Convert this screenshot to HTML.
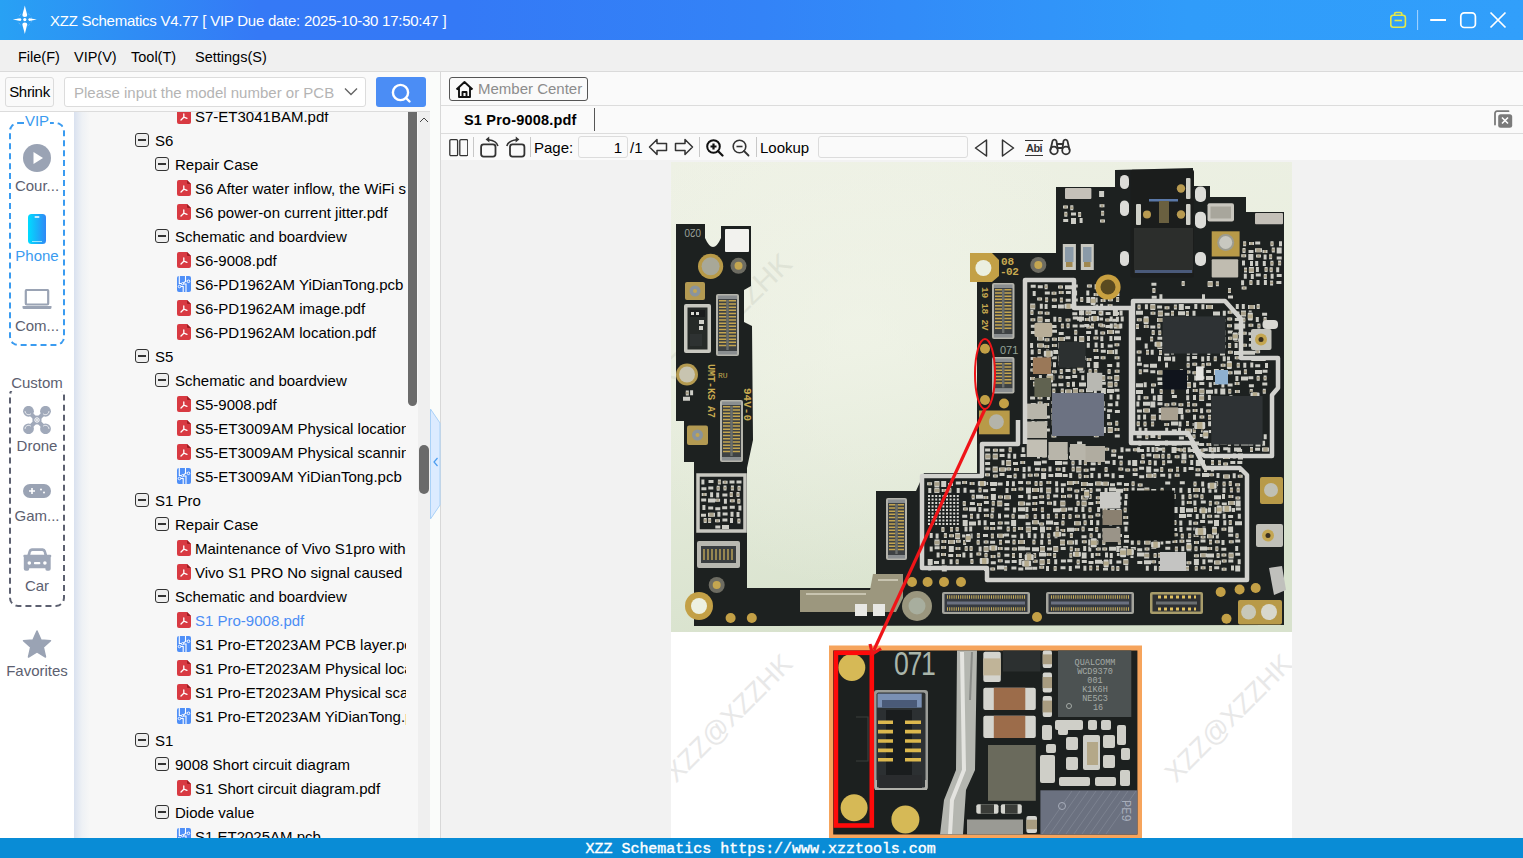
<!DOCTYPE html>
<html><head><meta charset="utf-8">
<style>
*{margin:0;padding:0;box-sizing:border-box}
html,body{width:1523px;height:858px;overflow:hidden;background:#fff;font-family:"Liberation Sans",sans-serif;color:#000}
.a{position:absolute}
#title{left:0;top:0;width:1523px;height:40px;background:linear-gradient(90deg,#28a1f4 0%,#3579f6 17%,#3479f6 30%,#3383f7 50%,#309cfa 78%,#319ffb 100%)}
#title .t{left:50px;top:12px;font-size:15px;color:#fff;white-space:nowrap;letter-spacing:-0.25px}
#menu{left:0;top:40px;width:1523px;height:32px;background:#f0f0f0;border-bottom:1px solid #dadada}
#menu span{position:absolute;top:9px;font-size:14.5px;color:#000}
#status{left:0;top:838px;width:1523px;height:20px;background:#098cd6}
#status .t{left:585.5px;top:3px;font-family:"Liberation Mono",monospace;font-size:15px;color:#fff;white-space:nowrap;-webkit-text-stroke:0.4px #fff;letter-spacing:-0.02px}

#lp{left:0;top:72px;width:441px;height:766px;background:#fafafa}
#lp .row0{left:0;top:0;width:431px;height:40px;background:#fafafa;border-bottom:1px solid #dcdcdc}
#shrink{left:5px;top:5px;width:49px;height:30px;border:1px solid #dcdcdc;border-radius:3px;background:#fafafa;font-size:15px;line-height:28px;text-align:center;letter-spacing:-0.3px}
#sinput{left:64px;top:5px;width:302px;height:30px;border:1px solid #dcdcdc;border-radius:3px;background:#fff}
#sinput span{position:absolute;left:9px;top:6px;font-size:15px;color:#b4b4b4;white-space:nowrap}
#sbtn{left:376px;top:5px;width:50px;height:30px;border-radius:3px;background:#4b8df5}
#strip{left:0;top:40px;width:74px;height:726px;background:#fff}
.dbox{position:absolute;left:9px;width:56px;border:2px dashed #3a9bf0;border-radius:9px}
.lbl{position:absolute;left:0;width:74px;text-align:center;font-size:15px;color:#5c6070;white-space:nowrap}
#tree{left:74px;top:40px;width:344px;height:726px;background:linear-gradient(90deg,#d9e1ef 0px,#eef1f5 8px,#f7f7f7 16px);overflow:hidden}
#tree .clip{position:absolute;left:0;top:0;width:332px;height:726px;overflow:hidden}
.tt{position:absolute;margin-top:1px;font-size:15px;line-height:18px;white-space:nowrap;color:#000}
.tt.sel{color:#4b8df5}
.bx{position:absolute;width:14px;height:14px;border:1.3px solid #333;border-radius:3px;background:#eeeeee}
.bx:after{content:"";position:absolute;left:2px;top:5.3px;width:8px;height:1.5px;background:#333}
svg.pdf,svg.pcb{position:absolute;width:14px;height:16px}
#vs1{left:408px;top:40px;width:9px;height:294px;background:#6b6b6b;border-radius:0 0 5px 5px}
#track{left:418px;top:40px;width:12px;height:726px;background:#efefef}
#vs2{left:419px;top:373px;width:10px;height:49px;background:#6a6a6a;border-radius:5px}
#split{left:430px;top:0;width:11px;height:766px;background:#fafcfa;border-right:1px solid #d8d8d8}

#rp{left:441px;top:72px;width:1082px;height:766px;background:#fafafa}
#mc{left:8px;top:5px;width:139px;height:24px;border:1px solid #555;border-radius:3px;background:#fafafa}
#mc span{position:absolute;left:28px;top:2px;font-size:15px;color:#8c8c8c;white-space:nowrap}
#l1{left:0;top:33px;width:1082px;height:1px;background:#dcdcdc}
#tab{left:23px;top:40px;font-size:14.5px;font-weight:bold;white-space:nowrap;letter-spacing:0.2px}
#tabsep{left:153px;top:36px;width:1px;height:23px;background:#555}
#l2{left:0;top:61px;width:1082px;height:1px;background:#dcdcdc}
#content{left:0;top:88px;width:1082px;height:678px;background:#f2f2f2;overflow:hidden}
.tsep{position:absolute;top:65px;width:1px;height:20px;background:#c8c8c8}
.tb{position:absolute;font-size:15px;white-space:nowrap;margin-top:1px}
.inp{position:absolute;border:1px solid #dcdcdc;border-radius:3px;background:#fafafa}
</style></head><body>
<div id="title" class="a">
  <svg class="a" style="left:8px;top:2px" width="36" height="36" viewBox="0 0 36 36"><g fill="#fff"><path d="M16.8 3.6 L19.2 13 L18.7 14.5 L16.8 15 L14.9 14.5 L14.4 13Z"/><path d="M16.8 32 L19.2 22.6 L18.7 21 L16.8 20.5 L14.9 21 L14.4 22.6Z"/><path d="M4.8 17.6 L12.5 16.2 L13.5 17.6 L12.5 19 Z"/><path d="M28.8 17.6 L21.1 16.2 L20.1 17.6 L21.1 19 Z"/><circle cx="16.8" cy="17.6" r="1.6"/></g><circle cx="16.8" cy="17.6" r="6.8" fill="none" stroke="#fff" stroke-opacity=".3" stroke-width=".8" stroke-dasharray="3 2"/></svg>
  <div class="a t">XZZ Schematics V4.77 [ VIP Due date: 2025-10-30 17:50:47 ]</div>
  <svg class="a" style="left:1385px;top:8px" width="130" height="26" viewBox="0 0 130 26">
    <g fill="none" stroke="#e4e848" stroke-width="1.6">
      <rect x="5.8" y="7.2" width="14.6" height="12" rx="2.5"/>
      <path d="M9.6 7 V6 a1.5 1.5 0 0 1 1.5 -1.5 h4.2 a1.5 1.5 0 0 1 1.5 1.5 V7"/>
      <path d="M9.5 12.5 H17"/>
    </g>
    <path d="M32.6 2 V22" stroke="#a9d6ff" stroke-width="1"/>
    <path d="M45.2 12 H61" stroke="#fff" stroke-width="2"/>
    <rect x="75.8" y="4.9" width="14.6" height="14.6" rx="3.5" fill="none" stroke="#fff" stroke-width="1.7"/>
    <path d="M105.5 4.5 L120.5 19.5 M120.5 4.5 L105.5 19.5" stroke="#fff" stroke-width="1.7"/>
  </svg>
</div>
<div id="menu" class="a">
  <span style="left:18px">File(F)</span>
  <span style="left:74px">VIP(V)</span>
  <span style="left:131px">Tool(T)</span>
  <span style="left:195px">Settings(S)</span>
</div>


<svg width="0" height="0" style="position:absolute">
 <defs>
  <symbol id="pdf" viewBox="0 0 14 16">
   <path d="M2 0 H10 L14 4 V14 a2 2 0 0 1 -2 2 H2 a2 2 0 0 1 -2 -2 V2 a2 2 0 0 1 2 -2Z" fill="#d83a42"/>
   <path d="M10 0 L14 4 H11 a1 1 0 0 1 -1 -1Z" fill="#9e1c22"/>
   <path d="M6.8 6 V9.2 M6.8 9.2 L4 12 M6.8 9.2 L10 10.3" stroke="#fff" stroke-width="1.3" fill="none" stroke-linecap="round"/>
  </symbol>
  <symbol id="pcb" viewBox="0 0 14 16">
   <rect x="0" y="0" width="14" height="16" rx="2" fill="#4f8ff7"/>
   <path d="M2.3 0 V7.5 H5.5 L8.5 5.5 V0 M13 5 H9.5 M3 10.5 H6.2 V16 M9 16 V8 H5.5" stroke="#fff" stroke-width="1.1" fill="none"/>
   <circle cx="11.5" cy="5.3" r="1.3" fill="#4f8ff7" stroke="#fff" stroke-width=".9"/>
   <circle cx="2.5" cy="10.5" r="1.3" fill="#4f8ff7" stroke="#fff" stroke-width=".9"/>
   <circle cx="5.5" cy="7.7" r="1.1" fill="#4f8ff7" stroke="#fff" stroke-width=".9"/>
  </symbol>
 </defs>
</svg>
<div id="lp" class="a">
 <div class="a row0">
  <div id="shrink" class="a">Shrink</div>
  <div id="sinput" class="a"><span>Please input the model number or PCB</span>
   <svg class="a" style="left:279px;top:9px" width="14" height="10" viewBox="0 0 14 10"><path d="M1 1.5 L7 7.5 L13 1.5" fill="none" stroke="#666" stroke-width="1.4"/></svg>
  </div>
  <div id="sbtn" class="a"><svg class="a" style="left:14px;top:5px" width="22" height="22" viewBox="0 0 22 22"><circle cx="10.5" cy="10.5" r="7.6" fill="none" stroke="#fff" stroke-width="2.4"/><path d="M16 16 L19.5 19.5" stroke="#fff" stroke-width="2.4" stroke-linecap="round"/></svg></div>
 </div>
 <div id="strip" class="a">
  <div class="dbox" style="top:10px;height:224px"></div>
  <div class="lbl" style="top:0px;"><span style="background:#fff;color:#3a9bf0;padding:0 1px">VIP</span></div>
  <svg class="a" style="left:23px;top:32px" width="28" height="28" viewBox="0 0 28 28"><circle cx="14" cy="14" r="14" fill="#9aa3b4"/><path d="M10.5 8 L20 14 L10.5 20Z" fill="#fff"/></svg>
  <div class="lbl" style="top:65px">Cour...</div>
  <svg class="a" style="left:28px;top:102px" width="18" height="30" viewBox="0 0 18 30"><defs><linearGradient id="pg" x1="0" x2="1"><stop offset="0" stop-color="#00dcff"/><stop offset="1" stop-color="#3088f5"/></linearGradient></defs><rect x="0" y="0" width="18" height="30" rx="3.5" fill="url(#pg)"/><rect x="6.5" y="2.3" width="5" height="1.4" rx=".7" fill="#fff"/><rect x="4" y="27" width="10" height="1" fill="#9be8ff"/></svg>
  <div class="lbl" style="top:135px;color:#3a9bf0">Phone</div>
  <svg class="a" style="left:22px;top:177px" width="30" height="20" viewBox="0 0 30 20"><rect x="3.8" y="1" width="22.4" height="14.5" rx="1" fill="none" stroke="#9aa3b4" stroke-width="2.2"/><path d="M0.5 17 H29.5 V18.5 a1.5 1.5 0 0 1 -1.5 1.5 H2 a1.5 1.5 0 0 1 -1.5 -1.5Z" fill="#9aa3b4"/></svg>
  <div class="lbl" style="top:205px">Com...</div>
  <div class="dbox" style="top:274px;height:221px;border-color:#5c6070"></div>
  <div class="lbl" style="top:262px"><span style="background:#fff;padding:0 1px">Custom</span></div>
  <svg class="a" style="left:23px;top:294px" width="28" height="28" viewBox="0 0 28 28"><g fill="#a0a9ba"><circle cx="5.5" cy="5.3" r="5.4"/><circle cx="22.5" cy="5.3" r="5.4"/><circle cx="5.5" cy="22.8" r="5.4"/><circle cx="22.5" cy="22.8" r="5.4"/></g><path d="M6 6 L22 22.3 M22 6 L6 22.3" stroke="#a0a9ba" stroke-width="4.2"/><circle cx="14" cy="14" r="4.6" fill="#a0a9ba"/><g fill="none" stroke="#fff" stroke-width=".7"><path d="M2 5 a3.6 3.6 0 0 0 6 2.8"/><path d="M26 5 a3.6 3.6 0 0 1 -6 2.8"/><path d="M2 23 a3.6 3.6 0 0 1 6 -2.8"/><path d="M26 23 a3.6 3.6 0 0 0 -6 -2.8"/><circle cx="14" cy="14" r="2.2" stroke-width="1"/></g><circle cx="14" cy="14" r="0.9" fill="#fff"/></svg>
  <div class="lbl" style="top:325px">Drone</div>
  <svg class="a" style="left:23px;top:372px" width="28" height="14" viewBox="0 0 28 14"><rect x="0" y="0" width="28" height="14" rx="7" fill="#9aa3b4"/><path d="M6 7 H12 M9 4 V10" stroke="#fff" stroke-width="1.6"/><circle cx="18" cy="5.5" r="1" fill="#fff"/><circle cx="21" cy="8.5" r="1" fill="#fff"/></svg>
  <div class="lbl" style="top:395px">Gam...</div>
  <svg class="a" style="left:23px;top:436px" width="29" height="24" viewBox="23 548 29 24"><path d="M26.8 557 L28.6 550.8 Q29.3 548.3 31.8 548.3 H42.7 Q45.2 548.3 45.9 550.8 L47.7 557Z" fill="#9ea7b8"/><path d="M29.6 557.2 L30.9 552.3 Q31.3 550.9 32.6 550.9 H41.9 Q43.2 550.9 43.6 552.3 L44.9 557.2Z" fill="#fff"/><rect x="23.3" y="554.7" width="28" height="2.6" rx="1.2" fill="#9ea7b8"/><path d="M23.8 557 H50.7 V568.8 Q50.7 570.8 48.7 570.8 H47 Q45.4 570.8 45.4 569 V568.3 H29.2 V569 Q29.2 570.8 27.6 570.8 H25.8 Q23.8 570.8 23.8 568.8Z" fill="#9ea7b8"/><circle cx="29.3" cy="563" r="1.8" fill="#fff"/><circle cx="44.9" cy="563" r="1.8" fill="#fff"/><rect x="33.9" y="561.9" width="6.5" height="2.4" rx="1" fill="#fff"/></svg>
  <div class="lbl" style="top:465px">Car</div>
  <svg class="a" style="left:22px;top:518px" width="30" height="29" viewBox="0 0 30 29"><path d="M15 1 L19 10 L28.5 10.8 L21.3 17.2 L23.5 27 L15 21.8 L6.5 27 L8.7 17.2 L1.5 10.8 L11 10Z" fill="#9aa3b4" stroke="#9aa3b4" stroke-width="1.5" stroke-linejoin="round"/></svg>
  <div class="lbl" style="top:550px">Favorites</div>
 </div>
 <div id="tree" class="a"><div class="clip">
<svg class="pdf" style="left:103px;top:-4px"><use href="#pdf"/></svg><span class="tt" style="left:121px;top:-5px">S7-ET3041BAM.pdf</span>
<i class="bx" style="left:61px;top:21px"></i><span class="tt" style="left:81px;top:19px">S6</span>
<i class="bx" style="left:81px;top:45px"></i><span class="tt" style="left:101px;top:43px">Repair Case</span>
<svg class="pdf" style="left:103px;top:68px"><use href="#pdf"/></svg><span class="tt" style="left:121px;top:67px">S6 After water inflow, the WiFi signal</span>
<svg class="pdf" style="left:103px;top:92px"><use href="#pdf"/></svg><span class="tt" style="left:121px;top:91px">S6 power-on current jitter.pdf</span>
<i class="bx" style="left:81px;top:117px"></i><span class="tt" style="left:101px;top:115px">Schematic and boardview</span>
<svg class="pdf" style="left:103px;top:140px"><use href="#pdf"/></svg><span class="tt" style="left:121px;top:139px">S6-9008.pdf</span>
<svg class="pcb" style="left:103px;top:164px"><use href="#pcb"/></svg><span class="tt" style="left:121px;top:163px">S6-PD1962AM YiDianTong.pcb</span>
<svg class="pdf" style="left:103px;top:188px"><use href="#pdf"/></svg><span class="tt" style="left:121px;top:187px">S6-PD1962AM image.pdf</span>
<svg class="pdf" style="left:103px;top:212px"><use href="#pdf"/></svg><span class="tt" style="left:121px;top:211px">S6-PD1962AM location.pdf</span>
<i class="bx" style="left:61px;top:237px"></i><span class="tt" style="left:81px;top:235px">S5</span>
<i class="bx" style="left:81px;top:261px"></i><span class="tt" style="left:101px;top:259px">Schematic and boardview</span>
<svg class="pdf" style="left:103px;top:284px"><use href="#pdf"/></svg><span class="tt" style="left:121px;top:283px">S5-9008.pdf</span>
<svg class="pdf" style="left:103px;top:308px"><use href="#pdf"/></svg><span class="tt" style="left:121px;top:307px">S5-ET3009AM Physical location.pdf</span>
<svg class="pdf" style="left:103px;top:332px"><use href="#pdf"/></svg><span class="tt" style="left:121px;top:331px">S5-ET3009AM Physical scanning.pdf</span>
<svg class="pcb" style="left:103px;top:356px"><use href="#pcb"/></svg><span class="tt" style="left:121px;top:355px">S5-ET3009AM YiDianTong.pcb</span>
<i class="bx" style="left:61px;top:381px"></i><span class="tt" style="left:81px;top:379px">S1 Pro</span>
<i class="bx" style="left:81px;top:405px"></i><span class="tt" style="left:101px;top:403px">Repair Case</span>
<svg class="pdf" style="left:103px;top:428px"><use href="#pdf"/></svg><span class="tt" style="left:121px;top:427px">Maintenance of Vivo S1pro without</span>
<svg class="pdf" style="left:103px;top:452px"><use href="#pdf"/></svg><span class="tt" style="left:121px;top:451px">Vivo S1 PRO No signal caused by</span>
<i class="bx" style="left:81px;top:477px"></i><span class="tt" style="left:101px;top:475px">Schematic and boardview</span>
<svg class="pdf" style="left:103px;top:500px"><use href="#pdf"/></svg><span class="tt sel" style="left:121px;top:499px">S1 Pro-9008.pdf</span>
<svg class="pcb" style="left:103px;top:524px"><use href="#pcb"/></svg><span class="tt" style="left:121px;top:523px">S1 Pro-ET2023AM PCB layer.pcb</span>
<svg class="pdf" style="left:103px;top:548px"><use href="#pdf"/></svg><span class="tt" style="left:121px;top:547px">S1 Pro-ET2023AM Physical location.pdf</span>
<svg class="pdf" style="left:103px;top:572px"><use href="#pdf"/></svg><span class="tt" style="left:121px;top:571px">S1 Pro-ET2023AM Physical scanning.pdf</span>
<svg class="pcb" style="left:103px;top:596px"><use href="#pcb"/></svg><span class="tt" style="left:121px;top:595px">S1 Pro-ET2023AM YiDianTong.pcb</span>
<i class="bx" style="left:61px;top:621px"></i><span class="tt" style="left:81px;top:619px">S1</span>
<i class="bx" style="left:81px;top:645px"></i><span class="tt" style="left:101px;top:643px">9008 Short circuit diagram</span>
<svg class="pdf" style="left:103px;top:668px"><use href="#pdf"/></svg><span class="tt" style="left:121px;top:667px">S1 Short circuit diagram.pdf</span>
<i class="bx" style="left:81px;top:693px"></i><span class="tt" style="left:101px;top:691px">Diode value</span>
<svg class="pcb" style="left:103px;top:716px"><use href="#pcb"/></svg><span class="tt" style="left:121px;top:715px">S1 ET2025AM.pcb</span>

 </div></div>
 <div id="track" class="a"><svg class="a" style="left:1px;top:4px" width="10" height="8" viewBox="0 0 10 8"><path d="M1 6 L5 2 L9 6" fill="none" stroke="#444" stroke-width="1"/></svg></div>
 <div id="vs1" class="a"></div>
 <div id="vs2" class="a"></div>
 <div id="split" class="a"><svg class="a" style="left:0;top:337px" width="11" height="111" viewBox="0 0 11 111"><path d="M0.5 0 L10 14 V96 L0.5 110Z" fill="#dcebff" stroke="#a9d1f7" stroke-width="1"/><path d="M7.5 49 L4 53 L7.5 57" fill="none" stroke="#4a9cf0" stroke-width="1.2"/></svg></div>
</div>


<div id="rp" class="a">
 <div id="mc" class="a"><svg class="a" style="left:5px;top:2px" width="19" height="19" viewBox="0 0 19 19"><path d="M1.5 9.5 L9.5 2 L17.5 9.5 M4 7.5 V17 H15 V7.5 M7.5 17 V12 H11.5 V17" fill="none" stroke="#111" stroke-width="1.9" stroke-linejoin="round"/></svg><span>Member Center</span></div>
 <div id="l1" class="a"></div>
 <div id="tab" class="a">S1 Pro-9008.pdf</div>
 <div id="tabsep" class="a"></div>
 <svg class="a" style="left:1053px;top:38px" width="20" height="19" viewBox="0 0 20 19"><path d="M1 14.5 V3.2 a2 2 0 0 1 2 -2 H14.5" fill="none" stroke="#7a7a7a" stroke-width="1.8" stroke-linecap="round"/><rect x="4.2" y="4.3" width="14" height="13.5" rx="2.5" fill="#7a7a7a"/><path d="M8 7.5 L14 13.5 M14 7.5 L8 13.5" stroke="#fff" stroke-width="1.6"/></svg>
 <div id="l2" class="a"></div>
 <!-- toolbar -->
 <svg class="a" style="left:7px;top:66px" width="20" height="19" viewBox="0 0 20 19"><rect x="1.8" y="1.7" width="7.8" height="16" rx="1.2" fill="none" stroke="#333" stroke-width="1.3"/><rect x="11.8" y="1.7" width="8" height="16" rx="1.2" fill="none" stroke="#333" stroke-width="1.3"/></svg><div class="tsep" style="left:32px;background:#c8c8c8"></div><svg class="a" style="left:38px;top:64px" width="22" height="22" viewBox="0 0 22 22"><rect x="2.1" y="8.4" width="14.4" height="12.2" rx="2.5" fill="none" stroke="#333" stroke-width="1.8"/><path d="M18.9 10 Q17.5 4.6 9.5 3.7" fill="none" stroke="#333" stroke-width="1.6"/><path d="M6.6 3.6 L10.2 0.6 L10.4 6.6Z" fill="#333"/></svg><svg class="a" style="left:64px;top:64px" width="22" height="22" viewBox="0 0 22 22"><rect x="5" y="8.4" width="14.4" height="12.2" rx="2.5" fill="none" stroke="#333" stroke-width="1.8"/><path d="M1.8 10 Q3.4 4.6 11.5 3.7" fill="none" stroke="#333" stroke-width="1.6"/><path d="M14.4 3.6 L10.8 0.6 L10.6 6.6Z" fill="#333"/></svg><div class="tsep" style="left:89px"></div>
 <div class="tb" style="left:93px;top:66px">Page:</div>
 <div class="inp" style="left:137px;top:64px;width:50px;height:22px"><span class="tb" style="right:5px;top:1px">1</span></div>
 <div class="tb" style="left:189px;top:66px">/1</div>
 <svg class="a" style="left:207px;top:66px" width="20" height="18" viewBox="0 0 20 18"><path d="M1.5 9 L9 1.5 V5.5 H18.5 V12.5 H9 V16.5Z" fill="none" stroke="#333" stroke-width="1.5" stroke-linejoin="round"/></svg>
 <svg class="a" style="left:233px;top:66px" width="20" height="18" viewBox="0 0 20 18"><path d="M18.5 9 L11 1.5 V5.5 H1.5 V12.5 H11 V16.5Z" fill="none" stroke="#333" stroke-width="1.5" stroke-linejoin="round"/></svg>
 <div class="tsep" style="left:258px"></div>
 <svg class="a" style="left:265px;top:67px" width="18" height="18" viewBox="0 0 18 18"><circle cx="7.5" cy="7.5" r="6.3" fill="none" stroke="#111" stroke-width="2"/><path d="M12 12 L16.5 16.5" stroke="#111" stroke-width="2.2" stroke-linecap="round"/><path d="M4.5 7.5 H10.5 M7.5 4.5 V10.5" stroke="#111" stroke-width="2.2"/></svg>
 <svg class="a" style="left:291px;top:67px" width="18" height="18" viewBox="0 0 18 18"><circle cx="7.5" cy="7.5" r="6.3" fill="none" stroke="#333" stroke-width="1.6"/><path d="M12 12 L16.5 16.5" stroke="#333" stroke-width="1.8" stroke-linecap="round"/><path d="M4.5 7.5 H10.5" stroke="#333" stroke-width="1.6"/></svg>
 <div class="tsep" style="left:315px"></div>
 <div class="tb" style="left:319px;top:66px">Lookup</div>
 <div class="inp" style="left:377px;top:64px;width:150px;height:22px"></div>
 <svg class="a" style="left:533px;top:67px" width="14" height="18" viewBox="0 0 14 18"><path d="M12.5 1 L1.5 9 L12.5 17Z" fill="none" stroke="#333" stroke-width="1.5" stroke-linejoin="round"/></svg>
 <svg class="a" style="left:560px;top:67px" width="14" height="18" viewBox="0 0 14 18"><path d="M1.5 1 L12.5 9 L1.5 17Z" fill="none" stroke="#333" stroke-width="1.5" stroke-linejoin="round"/></svg>
 <svg class="a" style="left:583px;top:67px" width="20" height="18" viewBox="0 0 20 18"><path d="M1 1.5 H19 M1 16.5 H19" stroke="#333" stroke-width="1.2"/><text x="10" y="13.3" text-anchor="middle" font-family="Liberation Sans" font-weight="bold" font-size="11" fill="#333" letter-spacing="-0.6">Abi</text></svg>
 <svg class="a" style="left:608px;top:66px" width="22" height="18" viewBox="0 0 22 18"><g fill="none" stroke="#333" stroke-width="1.8"><circle cx="5" cy="12.5" r="3.8"/><circle cx="17" cy="12.5" r="3.8"/><path d="M1.5 12 L3.5 3 a2.2 2.2 0 0 1 4 0 L8.5 10 M20.5 12 L18.5 3 a2.2 2.2 0 0 0 -4 0 L13.5 10 M8.3 6 H13.7 M8.7 10 H13.3"/></g></svg>
 <div id="content" class="a"><svg class="a" id="pdfsvg" style="left:230px;top:2px" width="621" height="676" viewBox="671 162 621 676"><rect x="671" y="162" width="621" height="676" fill="#fff"/><defs><linearGradient id="cream" x1="0" y1="0" x2="0.25" y2="1"><stop offset="0" stop-color="#eef1e5"/><stop offset=".45" stop-color="#e9eedf"/><stop offset="1" stop-color="#d8e2cd"/></linearGradient><radialGradient id="hl" gradientUnits="userSpaceOnUse" cx="860" cy="330" r="260"><stop offset="0" stop-color="#f2f5ea" stop-opacity=".6"/><stop offset="1" stop-color="#f2f5ea" stop-opacity="0"/></radialGradient></defs><rect x="671" y="162" width="621" height="470" fill="url(#cream)"/><rect x="671" y="162" width="621" height="470" fill="url(#hl)"/><g font-family="Liberation Sans" font-size="27" fill="#e8e8e8"><text transform="translate(727 720) rotate(-45) translate(-81 9)">XZZ@XZZHK</text><text transform="translate(1227 720) rotate(-45) translate(-81 9)">XZZ@XZZHK</text></g><g id="pcb"><text x="0" y="0" font-family="Liberation Sans" font-size="29" fill="#dfe3d6" transform="translate(721 322) rotate(-44) translate(-88 10)">XZZ@XZZHK</text><path d="M676 224 L705 224 L705 238 Q713 256 721 238 L721 226 L751 226 L751 286 L744 290 L744 322 L752 326 L753 440 L747 468 L747 588 L876 588 L876 491 L916 491 L924 473 L977 473 L977 282 L971 280 L971 253 L1056 253 L1056 187 L1115 187 L1115 170 L1193 168 L1193 186 L1210 186 L1210 197 L1246 197 L1246 212 L1284 212 L1284 625 L694 626 L694 462 L684 462 L684 421 L676 421 Z" fill="#1d2120" /><path d="M927.1 482.3h5v3h-5zM934.4 481.0h5v6h-5zM941.2 481.0h5v6h-5zM948.0 483.1h5v3h-5zM955.8 481.5h5v3h-5zM962.1 481.1h5v3h-5zM969.6 482.1h5v3h-5zM977.7 481.3h3v5h-3zM983.1 482.0h5v3h-5zM990.0 482.1h7v4h-7zM997.6 482.4h5v3h-5zM1006.0 481.0h3v5h-3zM1011.9 481.2h3v5h-3zM1018.1 481.1h5v3h-5zM1025.9 481.2h5v3h-5zM1034.6 481.1h3v5h-3zM1039.5 481.1h3v5h-3zM1046.3 481.0h5v3h-5zM1055.1 481.3h3v5h-3zM1060.8 483.2h5v3h-5zM1067.0 481.1h7v4h-7zM1074.1 481.0h5v3h-5zM1081.0 481.9h7v4h-7zM1088.1 483.1h5v3h-5zM1095.0 481.5h7v4h-7zM1102.0 481.8h7v4h-7zM1110.0 483.2h5v3h-5zM1116.8 482.3h5v3h-5zM1124.0 483.1h5v3h-5zM1131.6 481.2h3v5h-3zM1137.7 483.4h5v3h-5zM1165.2 481.5h5v3h-5zM1179.8 481.2h5v3h-5zM1193.5 481.4h3v5h-3zM1201.2 481.5h3v5h-3zM1207.9 483.0h5v3h-5zM1215.1 481.3h3v5h-3zM1222.6 481.5h3v5h-3zM1228.8 481.1h3v5h-3zM1235.1 483.3h5v3h-5zM928.3 488.0h3v5h-3zM934.4 487.5h5v6h-5zM941.7 488.9h5v3h-5zM948.3 487.8h3v5h-3zM956.7 487.9h3v5h-3zM963.5 487.8h3v5h-3zM969.7 489.7h5v3h-5zM978.5 487.6h3v5h-3zM983.1 489.2h5v3h-5zM990.7 487.9h5v3h-5zM1005.5 488.0h3v5h-3zM1011.3 488.0h5v3h-5zM1018.4 487.5h5v3h-5zM1026.0 487.5h5v6h-5zM1032.0 487.9h7v4h-7zM1039.8 487.6h3v5h-3zM1046.1 487.5h5v6h-5zM1055.4 487.5h3v5h-3zM1061.0 487.8h3v5h-3zM1067.2 487.8h5v3h-5zM1074.3 489.4h5v3h-5zM1081.0 488.1h5v3h-5zM1089.4 488.0h3v5h-3zM1095.8 488.5h5v3h-5zM1104.5 487.9h3v5h-3zM1109.0 487.6h7v4h-7zM1116.0 488.8h7v4h-7zM1123.5 487.9h5v3h-5zM1131.6 487.6h3v5h-3zM1137.0 488.2h7v4h-7zM1144.3 487.5h5v6h-5zM1151.2 489.0h5v3h-5zM1160.6 487.7h3v5h-3zM1172.1 487.9h3v5h-3zM1179.4 487.8h3v5h-3zM1187.8 487.9h3v5h-3zM1193.0 488.0h7v4h-7zM1201.9 487.8h3v5h-3zM1208.5 487.8h3v5h-3zM1214.2 487.6h3v5h-3zM1222.5 487.7h3v5h-3zM1229.9 487.5h3v5h-3zM1236.7 487.5h3v5h-3zM929.0 494.1h3v5h-3zM934.0 494.3h7v4h-7zM949.0 495.1h5v3h-5zM956.7 494.1h3v5h-3zM971.7 494.4h3v5h-3zM976.0 494.7h7v4h-7zM983.3 496.1h5v3h-5zM990.9 494.0h5v6h-5zM998.0 495.5h5v3h-5zM1004.0 495.3h7v4h-7zM1018.2 494.9h5v3h-5zM1027.7 494.5h3v5h-3zM1032.5 495.9h5v3h-5zM1039.1 495.2h5v3h-5zM1046.8 494.3h3v5h-3zM1053.2 494.5h5v3h-5zM1061.0 495.1h5v3h-5zM1067.1 494.6h5v3h-5zM1075.2 494.2h3v5h-3zM1081.0 495.5h7v4h-7zM1088.6 494.1h3v5h-3zM1095.8 496.2h5v3h-5zM1103.4 494.3h3v5h-3zM1111.6 494.5h3v5h-3zM1116.7 496.4h5v3h-5zM1124.7 494.0h3v5h-3zM1130.9 494.1h3v5h-3zM1137.1 494.0h5v6h-5zM1144.0 494.8h5v3h-5zM1158.7 494.1h3v5h-3zM1165.0 495.0h7v4h-7zM1172.7 494.0h3v5h-3zM1181.4 494.4h3v5h-3zM1188.5 494.1h3v5h-3zM1193.5 494.5h5v3h-5zM1200.4 494.2h3v5h-3zM1214.0 495.3h7v4h-7zM1222.0 494.1h3v5h-3zM1228.4 494.9h5v3h-5zM1235.4 496.4h5v3h-5zM934.8 501.6h5v3h-5zM941.2 501.4h5v3h-5zM948.8 500.6h5v3h-5zM957.2 500.9h3v5h-3zM962.8 500.9h3v5h-3zM969.9 502.1h5v3h-5zM977.0 502.9h5v3h-5zM983.9 501.0h5v3h-5zM991.8 500.7h3v5h-3zM997.2 500.5h5v6h-5zM1004.3 503.0h5v3h-5zM1018.0 501.6h7v4h-7zM1025.7 502.4h5v3h-5zM1032.3 501.9h5v3h-5zM1039.2 500.9h5v3h-5zM1047.0 501.8h5v3h-5zM1053.3 500.7h3v5h-3zM1060.3 500.5h5v6h-5zM1076.6 500.7h3v5h-3zM1081.6 500.5h5v6h-5zM1088.3 502.0h5v3h-5zM1095.7 501.0h5v3h-5zM1102.2 500.6h3v5h-3zM1109.2 500.5h5v6h-5zM1116.3 501.9h5v3h-5zM1124.1 500.6h3v5h-3zM1130.4 502.6h5v3h-5zM1137.0 501.9h5v3h-5zM1152.5 500.6h3v5h-3zM1158.5 500.5h5v6h-5zM1166.0 501.7h5v3h-5zM1181.5 500.6h3v5h-3zM1186.8 501.0h5v3h-5zM1193.4 500.6h3v5h-3zM1200.8 500.6h5v3h-5zM1208.9 500.7h3v5h-3zM1214.4 501.6h5v3h-5zM1221.8 502.4h5v3h-5zM1228.0 501.1h7v4h-7zM1235.6 500.5h5v6h-5zM927.5 507.0h5v6h-5zM936.2 507.4h3v5h-3zM948.5 507.4h3v5h-3zM955.2 509.2h5v3h-5zM962.9 507.5h5v3h-5zM969.0 507.2h7v4h-7zM978.4 507.1h3v5h-3zM983.6 508.5h5v3h-5zM991.2 507.4h3v5h-3zM1004.4 507.4h5v3h-5zM1012.9 507.5h3v5h-3zM1018.0 507.2h7v4h-7zM1025.4 507.1h3v5h-3zM1032.1 507.9h5v3h-5zM1040.9 507.2h3v5h-3zM1053.0 508.3h7v4h-7zM1060.0 507.8h7v4h-7zM1067.7 507.6h5v3h-5zM1074.7 507.0h3v5h-3zM1081.4 507.1h3v5h-3zM1088.5 507.2h3v5h-3zM1097.1 507.0h3v5h-3zM1102.5 507.6h5v3h-5zM1109.7 508.7h5v3h-5zM1116.4 509.0h5v3h-5zM1123.7 507.4h3v5h-3zM1130.9 508.9h5v3h-5zM1137.9 508.6h5v3h-5zM1146.5 507.3h3v5h-3zM1151.9 507.1h3v5h-3zM1158.0 507.0h5v6h-5zM1165.0 508.0h7v4h-7zM1172.6 507.0h5v6h-5zM1179.9 507.0h5v6h-5zM1186.0 508.3h7v4h-7zM1193.9 507.0h3v5h-3zM1200.4 507.1h5v3h-5zM1208.0 507.5h3v5h-3zM1214.4 507.0h5v6h-5zM1221.6 507.4h3v5h-3zM1228.0 508.1h7v4h-7zM1235.8 507.5h5v3h-5zM929.8 513.6h3v5h-3zM934.0 513.6h7v4h-7zM942.1 513.7h3v5h-3zM948.0 514.0h5v3h-5zM962.2 514.7h5v3h-5zM970.0 513.7h3v5h-3zM976.5 513.7h3v5h-3zM983.9 514.1h5v3h-5zM990.5 513.6h3v5h-3zM998.0 513.6h3v5h-3zM1004.1 514.5h5v3h-5zM1011.6 513.8h3v5h-3zM1018.0 514.7h7v4h-7zM1025.4 513.8h3v5h-3zM1033.7 513.9h3v5h-3zM1041.3 513.9h3v5h-3zM1046.9 513.8h3v5h-3zM1054.9 513.6h3v5h-3zM1062.0 514.0h3v5h-3zM1068.5 514.0h3v5h-3zM1074.9 514.8h5v3h-5zM1082.5 513.8h3v5h-3zM1088.2 515.2h5v3h-5zM1095.4 513.6h5v3h-5zM1102.4 515.2h5v3h-5zM1109.9 514.8h5v3h-5zM1116.1 515.4h5v3h-5zM1123.2 515.9h5v3h-5zM1131.4 513.6h3v5h-3zM1139.6 513.6h3v5h-3zM1144.0 515.3h5v3h-5zM1151.4 515.1h5v3h-5zM1158.2 513.9h3v5h-3zM1165.6 513.5h5v3h-5zM1179.0 513.9h7v4h-7zM1186.8 513.9h5v3h-5zM1195.7 513.9h3v5h-3zM1202.2 513.7h3v5h-3zM1207.1 514.7h5v3h-5zM1214.5 514.8h5v3h-5zM1222.7 513.8h3v5h-3zM1228.1 515.1h5v3h-5zM1237.8 513.7h3v5h-3zM927.0 521.8h5v3h-5zM935.4 520.3h3v5h-3zM941.6 522.1h5v3h-5zM948.3 521.3h5v3h-5zM956.0 520.1h3v5h-3zM962.7 520.0h5v6h-5zM969.0 521.4h7v4h-7zM977.8 520.3h3v5h-3zM983.6 520.3h3v5h-3zM990.0 521.9h5v3h-5zM997.8 521.4h5v3h-5zM1004.4 521.6h5v3h-5zM1011.1 520.0h5v6h-5zM1025.6 522.3h5v3h-5zM1032.0 520.3h7v4h-7zM1039.1 522.4h5v3h-5zM1046.0 520.4h7v4h-7zM1053.7 522.1h5v3h-5zM1061.4 520.5h3v5h-3zM1074.0 521.2h7v4h-7zM1083.6 520.2h3v5h-3zM1090.0 520.1h3v5h-3zM1096.3 520.2h3v5h-3zM1109.2 520.5h3v5h-3zM1117.0 522.1h5v3h-5zM1123.4 521.7h5v3h-5zM1130.0 520.1h3v5h-3zM1137.1 520.4h3v5h-3zM1146.6 520.4h3v5h-3zM1158.8 520.5h5v3h-5zM1173.4 520.1h3v5h-3zM1179.3 520.4h3v5h-3zM1188.7 520.3h3v5h-3zM1193.2 521.8h5v3h-5zM1200.1 520.1h5v3h-5zM1207.8 520.4h5v3h-5zM1214.0 520.0h5v6h-5zM1223.3 520.2h3v5h-3zM1228.8 520.0h3v5h-3zM1235.0 521.3h7v4h-7zM941.4 527.0h3v5h-3zM950.0 526.7h3v5h-3zM955.7 526.5h3v5h-3zM964.5 526.5h3v5h-3zM969.2 526.6h3v5h-3zM983.8 526.8h5v3h-5zM990.2 527.1h5v3h-5zM997.2 526.6h5v3h-5zM1006.7 526.6h3v5h-3zM1012.9 526.7h3v5h-3zM1018.1 527.1h5v3h-5zM1025.9 526.5h5v6h-5zM1032.3 526.9h5v3h-5zM1040.0 526.5h5v6h-5zM1046.3 527.1h5v3h-5zM1055.8 526.5h3v5h-3zM1060.3 528.9h5v3h-5zM1067.0 527.7h7v4h-7zM1074.2 527.9h5v3h-5zM1081.6 526.5h3v5h-3zM1088.2 528.0h5v3h-5zM1095.2 526.9h3v5h-3zM1102.3 528.6h5v3h-5zM1109.5 528.7h5v3h-5zM1116.5 526.7h3v5h-3zM1124.5 526.6h3v5h-3zM1132.1 526.7h3v5h-3zM1138.5 526.8h3v5h-3zM1144.2 527.0h5v3h-5zM1151.1 526.5h5v6h-5zM1159.6 526.9h3v5h-3zM1165.1 526.5h5v6h-5zM1172.1 528.0h5v3h-5zM1179.5 526.9h3v5h-3zM1186.5 527.5h5v3h-5zM1193.3 527.6h5v3h-5zM1202.5 526.5h3v5h-3zM1221.4 527.8h5v3h-5zM1228.1 526.5h5v6h-5zM929.7 533.0h3v5h-3zM935.6 533.5h3v5h-3zM943.9 533.1h3v5h-3zM949.0 534.3h5v3h-5zM955.1 533.0h5v6h-5zM962.1 534.4h5v3h-5zM969.6 533.4h3v5h-3zM976.9 533.1h3v5h-3zM983.0 533.9h5v3h-5zM990.9 533.5h3v5h-3zM997.0 533.7h7v4h-7zM1004.1 533.6h5v3h-5zM1011.4 534.7h5v3h-5zM1020.2 533.4h3v5h-3zM1027.7 533.1h3v5h-3zM1033.5 533.5h3v5h-3zM1040.8 533.2h3v5h-3zM1047.2 533.3h3v5h-3zM1054.5 533.2h3v5h-3zM1060.6 533.2h5v3h-5zM1069.9 533.1h3v5h-3zM1081.5 535.3h5v3h-5zM1089.6 533.3h3v5h-3zM1097.8 533.3h3v5h-3zM1102.6 534.4h5v3h-5zM1117.0 533.9h5v3h-5zM1124.0 535.1h5v3h-5zM1132.5 533.5h3v5h-3zM1137.5 534.3h5v3h-5zM1145.1 533.5h3v5h-3zM1151.3 534.7h5v3h-5zM1160.0 533.1h3v5h-3zM1165.5 535.5h5v3h-5zM1172.8 533.3h5v3h-5zM1180.8 533.4h3v5h-3zM1188.1 533.2h3v5h-3zM1193.6 533.9h5v3h-5zM1200.6 535.4h5v3h-5zM1207.0 534.3h7v4h-7zM1215.8 533.5h3v5h-3zM1228.2 533.8h5v3h-5zM1235.5 533.2h3v5h-3zM934.5 539.5h5v6h-5zM941.4 540.1h5v3h-5zM948.0 540.0h7v4h-7zM955.8 539.8h5v3h-5zM963.1 539.9h3v5h-3zM976.7 539.7h3v5h-3zM983.6 540.4h5v3h-5zM990.1 540.8h5v3h-5zM999.0 539.8h3v5h-3zM1004.9 540.3h5v3h-5zM1012.5 539.6h3v5h-3zM1018.0 539.9h7v4h-7zM1032.4 539.6h3v5h-3zM1040.2 539.8h3v5h-3zM1047.9 539.6h3v5h-3zM1060.0 539.5h5v6h-5zM1067.0 540.5h7v4h-7zM1074.8 539.7h3v5h-3zM1081.8 540.2h5v3h-5zM1088.2 539.5h5v6h-5zM1095.3 539.8h3v5h-3zM1102.3 540.0h3v5h-3zM1117.9 539.7h3v5h-3zM1123.9 539.8h5v3h-5zM1130.8 539.8h3v5h-3zM1137.2 539.7h3v5h-3zM1144.0 540.5h7v4h-7zM1153.8 539.7h3v5h-3zM1158.3 541.5h5v3h-5zM1165.6 540.7h5v3h-5zM1172.4 540.0h5v3h-5zM1179.4 539.8h5v3h-5zM1186.1 539.5h5v3h-5zM1194.0 540.9h5v3h-5zM1200.5 539.5h5v3h-5zM1209.0 539.6h3v5h-3zM1214.8 540.2h5v3h-5zM1221.5 539.9h3v5h-3zM1228.8 540.3h5v3h-5zM1235.2 539.6h5v3h-5zM929.7 546.5h3v5h-3zM934.6 546.2h5v3h-5zM941.1 546.1h5v3h-5zM948.8 546.0h5v6h-5zM955.5 547.1h5v3h-5zM964.7 546.1h3v5h-3zM969.6 546.0h3v5h-3zM978.6 546.5h3v5h-3zM983.7 546.0h5v6h-5zM991.9 546.1h3v5h-3zM997.7 547.1h5v3h-5zM1004.4 547.3h5v3h-5zM1011.9 547.4h5v3h-5zM1018.0 546.4h7v4h-7zM1025.1 547.3h5v3h-5zM1032.0 547.3h7v4h-7zM1040.0 546.0h5v6h-5zM1047.0 547.4h5v3h-5zM1053.2 546.0h5v6h-5zM1060.7 547.1h5v3h-5zM1069.8 546.4h3v5h-3zM1074.7 548.1h5v3h-5zM1083.2 546.0h3v5h-3zM1088.3 546.5h3v5h-3zM1095.8 547.5h5v3h-5zM1102.2 547.4h5v3h-5zM1109.0 546.8h7v4h-7zM1116.3 546.0h5v6h-5zM1123.2 546.0h5v6h-5zM1130.8 547.0h5v3h-5zM1137.2 548.2h5v3h-5zM1144.5 547.4h5v3h-5zM1151.3 546.1h5v3h-5zM1165.3 546.7h5v3h-5zM1174.9 546.5h3v5h-3zM1181.3 546.3h3v5h-3zM1186.9 548.3h5v3h-5zM1194.5 546.3h3v5h-3zM1200.0 546.5h7v4h-7zM1207.2 546.9h5v3h-5zM1215.3 546.3h3v5h-3zM1221.3 547.8h5v3h-5zM1235.2 546.1h3v5h-3zM936.6 552.5h3v5h-3zM941.0 552.9h5v3h-5zM948.2 554.0h5v3h-5zM956.0 554.0h5v3h-5zM962.4 552.6h3v5h-3zM969.6 552.7h3v5h-3zM976.3 552.6h5v3h-5zM984.5 552.8h3v5h-3zM990.6 555.0h5v3h-5zM997.3 552.6h3v5h-3zM1004.4 553.8h5v3h-5zM1012.0 552.9h3v5h-3zM1018.9 552.9h3v5h-3zM1025.9 552.8h5v3h-5zM1033.1 553.0h3v5h-3zM1039.0 552.6h7v4h-7zM1046.4 552.9h5v3h-5zM1053.1 552.9h3v5h-3zM1069.4 552.7h3v5h-3zM1081.6 552.5h5v6h-5zM1090.8 553.0h3v5h-3zM1095.4 553.1h5v3h-5zM1105.0 552.6h3v5h-3zM1109.8 552.9h3v5h-3zM1116.9 552.9h5v3h-5zM1123.9 553.0h5v3h-5zM1130.5 552.9h3v5h-3zM1137.0 552.5h7v4h-7zM1144.2 552.5h5v6h-5zM1153.6 553.0h3v5h-3zM1158.1 552.8h3v5h-3zM1165.0 553.0h7v4h-7zM1172.0 552.8h7v4h-7zM1179.3 552.7h3v5h-3zM1193.9 554.3h5v3h-5zM1200.0 553.3h7v4h-7zM1207.0 553.5h7v4h-7zM1216.6 552.9h3v5h-3zM1221.4 553.5h5v3h-5zM1228.6 552.5h5v6h-5zM1235.2 552.8h5v3h-5zM927.7 559.0h5v6h-5zM934.0 560.9h5v3h-5zM941.7 559.3h3v5h-3zM949.6 559.3h3v5h-3zM955.7 559.3h3v5h-3zM970.4 559.1h3v5h-3zM985.4 559.1h3v5h-3zM990.8 561.2h5v3h-5zM997.8 559.3h5v3h-5zM1004.8 560.3h5v3h-5zM1011.7 560.1h5v3h-5zM1018.7 559.0h5v6h-5zM1025.4 559.0h5v3h-5zM1032.7 559.7h5v3h-5zM1039.6 559.0h5v6h-5zM1047.1 559.0h3v5h-3zM1054.2 559.3h3v5h-3zM1060.9 559.5h5v3h-5zM1067.3 559.2h5v3h-5zM1076.7 559.4h3v5h-3zM1081.8 560.0h5v3h-5zM1088.5 561.1h5v3h-5zM1095.0 559.8h7v4h-7zM1102.1 561.0h5v3h-5zM1109.2 559.3h3v5h-3zM1116.4 560.5h5v3h-5zM1123.3 559.0h5v6h-5zM1137.3 561.1h5v3h-5zM1144.0 560.3h7v4h-7zM1151.1 560.3h5v3h-5zM1158.4 561.0h5v3h-5zM1172.5 560.0h5v3h-5zM1179.3 560.8h5v3h-5zM1186.4 561.2h5v3h-5zM1193.9 559.0h5v6h-5zM1202.4 559.2h3v5h-3zM1207.8 559.4h5v3h-5zM1214.0 560.4h7v4h-7zM1221.7 559.4h5v3h-5zM1228.3 559.6h5v3h-5zM1237.7 559.2h3v5h-3zM928.2 565.5h3v5h-3zM934.1 566.7h5v3h-5zM941.8 565.5h5v6h-5zM962.8 566.7h5v3h-5zM969.6 566.9h5v3h-5zM976.8 566.1h5v3h-5zM984.0 566.0h3v5h-3zM990.2 567.4h5v3h-5zM997.0 565.6h7v4h-7zM1004.1 565.8h3v5h-3zM1011.4 566.4h5v3h-5zM1018.3 567.6h5v3h-5zM1025.0 565.7h7v4h-7zM1032.2 566.8h5v3h-5zM1039.2 565.8h5v3h-5zM1046.0 566.0h3v5h-3zM1053.7 565.9h3v5h-3zM1060.5 566.2h5v3h-5zM1068.8 565.9h3v5h-3zM1075.0 565.6h5v3h-5zM1083.4 565.7h3v5h-3zM1089.2 565.5h3v5h-3zM1096.0 565.6h3v5h-3zM1103.0 567.5h5v3h-5zM1111.3 565.8h3v5h-3zM1116.3 565.9h3v5h-3zM1125.2 565.6h3v5h-3zM1145.8 565.7h3v5h-3zM1153.9 565.8h3v5h-3zM1158.8 565.9h3v5h-3zM1165.5 567.8h5v3h-5zM1172.8 567.2h5v3h-5zM1179.0 566.8h7v4h-7zM1186.0 565.7h3v5h-3zM1194.8 565.7h3v5h-3zM1200.6 566.2h5v3h-5zM1209.0 565.9h3v5h-3zM1214.2 566.2h5v3h-5zM1221.6 567.7h5v3h-5zM1231.0 565.6h3v5h-3zM1235.2 565.5h5v6h-5z" fill="#cdcdc6"/><path d="M928.4 482.3h2.4v3h-2.4zM934.4 482.3h5v3.4h-5zM949.3 483.1h2.4v3h-2.4zM963.4 481.1h2.4v3h-2.4zM970.9 482.1h2.4v3h-2.4zM1027.2 481.2h2.4v3h-2.4zM1034.6 482.4h3v2.4h-3zM1039.5 482.4h3v2.4h-3zM1047.6 481.0h2.4v3h-2.4zM1068.3 481.1h4.4v4h-4.4zM1075.4 481.0h2.4v3h-2.4zM1082.3 481.9h4.4v4h-4.4zM1096.3 481.5h4.4v4h-4.4zM1103.3 481.8h4.4v4h-4.4zM1131.6 482.5h3v2.4h-3zM1139.0 483.4h2.4v3h-2.4zM1193.5 482.7h3v2.4h-3zM1209.2 483.0h2.4v3h-2.4zM1215.1 482.6h3v2.4h-3zM1222.6 482.8h3v2.4h-3zM1228.8 482.4h3v2.4h-3zM1236.4 483.3h2.4v3h-2.4zM934.4 488.8h5v3.4h-5zM943.0 488.9h2.4v3h-2.4zM948.3 489.1h3v2.4h-3zM978.5 488.9h3v2.4h-3zM1012.6 488.0h2.4v3h-2.4zM1019.7 487.5h2.4v3h-2.4zM1033.3 487.9h4.4v4h-4.4zM1046.1 488.8h5v3.4h-5zM1068.5 487.8h2.4v3h-2.4zM1075.6 489.4h2.4v3h-2.4zM1082.3 488.1h2.4v3h-2.4zM1089.4 489.3h3v2.4h-3zM1124.8 487.9h2.4v3h-2.4zM1144.3 488.8h5v3.4h-5zM1160.6 489.0h3v2.4h-3zM1194.3 488.0h4.4v4h-4.4zM1229.9 488.8h3v2.4h-3zM1236.7 488.8h3v2.4h-3zM950.3 495.1h2.4v3h-2.4zM971.7 495.7h3v2.4h-3zM984.6 496.1h2.4v3h-2.4zM999.3 495.5h2.4v3h-2.4zM1005.3 495.3h4.4v4h-4.4zM1040.4 495.2h2.4v3h-2.4zM1046.8 495.6h3v2.4h-3zM1062.3 495.1h2.4v3h-2.4zM1068.4 494.6h2.4v3h-2.4zM1082.3 495.5h4.4v4h-4.4zM1088.6 495.4h3v2.4h-3zM1097.1 496.2h2.4v3h-2.4zM1103.4 495.6h3v2.4h-3zM1111.6 495.8h3v2.4h-3zM1130.9 495.4h3v2.4h-3zM1166.3 495.0h4.4v4h-4.4zM1172.7 495.3h3v2.4h-3zM1188.5 495.4h3v2.4h-3zM1194.8 494.5h2.4v3h-2.4zM1200.4 495.5h3v2.4h-3zM1229.7 494.9h2.4v3h-2.4zM1236.7 496.4h2.4v3h-2.4zM936.1 501.6h2.4v3h-2.4zM950.1 500.6h2.4v3h-2.4zM957.2 502.2h3v2.4h-3zM962.8 502.2h3v2.4h-3zM978.3 502.9h2.4v3h-2.4zM991.8 502.0h3v2.4h-3zM997.2 501.8h5v3.4h-5zM1019.3 501.6h4.4v4h-4.4zM1033.6 501.9h2.4v3h-2.4zM1048.3 501.8h2.4v3h-2.4zM1060.3 501.8h5v3.4h-5zM1076.6 502.0h3v2.4h-3zM1081.6 501.8h5v3.4h-5zM1097.0 501.0h2.4v3h-2.4zM1102.2 501.9h3v2.4h-3zM1109.2 501.8h5v3.4h-5zM1117.6 501.9h2.4v3h-2.4zM1131.7 502.6h2.4v3h-2.4zM1152.5 501.9h3v2.4h-3zM1167.3 501.7h2.4v3h-2.4zM1188.1 501.0h2.4v3h-2.4zM1208.9 502.0h3v2.4h-3zM1215.7 501.6h2.4v3h-2.4zM1229.3 501.1h4.4v4h-4.4zM936.2 508.7h3v2.4h-3zM956.5 509.2h2.4v3h-2.4zM964.2 507.5h2.4v3h-2.4zM991.2 508.7h3v2.4h-3zM1033.4 507.9h2.4v3h-2.4zM1040.9 508.5h3v2.4h-3zM1061.3 507.8h4.4v4h-4.4zM1088.5 508.5h3v2.4h-3zM1103.8 507.6h2.4v3h-2.4zM1123.7 508.7h3v2.4h-3zM1132.2 508.9h2.4v3h-2.4zM1193.9 508.3h3v2.4h-3zM1201.7 507.1h2.4v3h-2.4zM1221.6 508.7h3v2.4h-3zM929.8 514.9h3v2.4h-3zM942.1 515.0h3v2.4h-3zM949.3 514.0h2.4v3h-2.4zM970.0 515.0h3v2.4h-3zM985.2 514.1h2.4v3h-2.4zM990.5 514.9h3v2.4h-3zM1011.6 515.1h3v2.4h-3zM1025.4 515.1h3v2.4h-3zM1033.7 515.2h3v2.4h-3zM1046.9 515.1h3v2.4h-3zM1054.9 514.9h3v2.4h-3zM1062.0 515.3h3v2.4h-3zM1068.5 515.3h3v2.4h-3zM1076.2 514.8h2.4v3h-2.4zM1089.5 515.2h2.4v3h-2.4zM1096.7 513.6h2.4v3h-2.4zM1103.7 515.2h2.4v3h-2.4zM1111.2 514.8h2.4v3h-2.4zM1124.5 515.9h2.4v3h-2.4zM1139.6 514.9h3v2.4h-3zM1145.3 515.3h2.4v3h-2.4zM1166.9 513.5h2.4v3h-2.4zM1208.4 514.7h2.4v3h-2.4zM942.9 522.1h2.4v3h-2.4zM999.1 521.4h2.4v3h-2.4zM1033.3 520.3h4.4v4h-4.4zM1040.4 522.4h2.4v3h-2.4zM1061.4 521.8h3v2.4h-3zM1075.3 521.2h4.4v4h-4.4zM1083.6 521.5h3v2.4h-3zM1130.0 521.4h3v2.4h-3zM1173.4 521.4h3v2.4h-3zM1194.5 521.8h2.4v3h-2.4zM1228.8 521.3h3v2.4h-3zM941.4 528.3h3v2.4h-3zM950.0 528.0h3v2.4h-3zM955.7 527.8h3v2.4h-3zM985.1 526.8h2.4v3h-2.4zM991.5 527.1h2.4v3h-2.4zM1006.7 527.9h3v2.4h-3zM1012.9 528.0h3v2.4h-3zM1019.4 527.1h2.4v3h-2.4zM1025.9 527.8h5v3.4h-5zM1047.6 527.1h2.4v3h-2.4zM1055.8 527.8h3v2.4h-3zM1061.6 528.9h2.4v3h-2.4zM1075.5 527.9h2.4v3h-2.4zM1081.6 527.8h3v2.4h-3zM1095.2 528.2h3v2.4h-3zM1110.8 528.7h2.4v3h-2.4zM1145.5 527.0h2.4v3h-2.4zM1151.1 527.8h5v3.4h-5zM1159.6 528.2h3v2.4h-3zM1222.7 527.8h2.4v3h-2.4zM943.9 534.4h3v2.4h-3zM950.3 534.3h2.4v3h-2.4zM955.1 534.3h5v3.4h-5zM976.9 534.4h3v2.4h-3zM990.9 534.8h3v2.4h-3zM998.3 533.7h4.4v4h-4.4zM1047.2 534.6h3v2.4h-3zM1054.5 534.5h3v2.4h-3zM1069.9 534.4h3v2.4h-3zM1089.6 534.6h3v2.4h-3zM1138.8 534.3h2.4v3h-2.4zM1152.6 534.7h2.4v3h-2.4zM1174.1 533.3h2.4v3h-2.4zM1180.8 534.7h3v2.4h-3zM1188.1 534.5h3v2.4h-3zM1194.9 533.9h2.4v3h-2.4zM1201.9 535.4h2.4v3h-2.4zM1208.3 534.3h4.4v4h-4.4zM1235.5 534.5h3v2.4h-3zM934.5 540.8h5v3.4h-5zM942.7 540.1h2.4v3h-2.4zM949.3 540.0h4.4v4h-4.4zM957.1 539.8h2.4v3h-2.4zM963.1 541.2h3v2.4h-3zM976.7 541.0h3v2.4h-3zM984.9 540.4h2.4v3h-2.4zM999.0 541.1h3v2.4h-3zM1012.5 540.9h3v2.4h-3zM1019.3 539.9h4.4v4h-4.4zM1032.4 540.9h3v2.4h-3zM1047.9 540.9h3v2.4h-3zM1060.0 540.8h5v3.4h-5zM1068.3 540.5h4.4v4h-4.4zM1083.1 540.2h2.4v3h-2.4zM1095.3 541.1h3v2.4h-3zM1102.3 541.3h3v2.4h-3zM1117.9 541.0h3v2.4h-3zM1137.2 541.0h3v2.4h-3zM1145.3 540.5h4.4v4h-4.4zM1153.8 541.0h3v2.4h-3zM1173.7 540.0h2.4v3h-2.4zM1180.7 539.8h2.4v3h-2.4zM1195.3 540.9h2.4v3h-2.4zM1209.0 540.9h3v2.4h-3zM1216.1 540.2h2.4v3h-2.4zM1230.1 540.3h2.4v3h-2.4zM942.4 546.1h2.4v3h-2.4zM956.8 547.1h2.4v3h-2.4zM964.7 547.4h3v2.4h-3zM969.6 547.3h3v2.4h-3zM983.7 547.3h5v3.4h-5zM991.9 547.4h3v2.4h-3zM999.0 547.1h2.4v3h-2.4zM1013.2 547.4h2.4v3h-2.4zM1040.0 547.3h5v3.4h-5zM1053.2 547.3h5v3.4h-5zM1069.8 547.7h3v2.4h-3zM1076.0 548.1h2.4v3h-2.4zM1097.1 547.5h2.4v3h-2.4zM1103.5 547.4h2.4v3h-2.4zM1145.8 547.4h2.4v3h-2.4zM1174.9 547.8h3v2.4h-3zM1194.5 547.6h3v2.4h-3zM1208.5 546.9h2.4v3h-2.4zM1215.3 547.6h3v2.4h-3zM942.3 552.9h2.4v3h-2.4zM957.3 554.0h2.4v3h-2.4zM977.6 552.6h2.4v3h-2.4zM984.5 554.1h3v2.4h-3zM991.9 555.0h2.4v3h-2.4zM997.3 553.9h3v2.4h-3zM1012.0 554.2h3v2.4h-3zM1027.2 552.8h2.4v3h-2.4zM1033.1 554.3h3v2.4h-3zM1047.7 552.9h2.4v3h-2.4zM1053.1 554.2h3v2.4h-3zM1069.4 554.0h3v2.4h-3zM1096.7 553.1h2.4v3h-2.4zM1144.2 553.8h5v3.4h-5zM1153.6 554.3h3v2.4h-3zM1158.1 554.1h3v2.4h-3zM1195.2 554.3h2.4v3h-2.4zM1201.3 553.3h4.4v4h-4.4zM1216.6 554.2h3v2.4h-3zM1222.7 553.5h2.4v3h-2.4zM1228.6 553.8h5v3.4h-5zM955.7 560.6h3v2.4h-3zM970.4 560.4h3v2.4h-3zM985.4 560.4h3v2.4h-3zM999.1 559.3h2.4v3h-2.4zM1026.7 559.0h2.4v3h-2.4zM1034.0 559.7h2.4v3h-2.4zM1039.6 560.3h5v3.4h-5zM1047.1 560.3h3v2.4h-3zM1076.7 560.7h3v2.4h-3zM1103.4 561.0h2.4v3h-2.4zM1123.3 560.3h5v3.4h-5zM1152.4 560.3h2.4v3h-2.4zM1159.7 561.0h2.4v3h-2.4zM1187.7 561.2h2.4v3h-2.4zM1215.3 560.4h4.4v4h-4.4zM1223.0 559.4h2.4v3h-2.4zM928.2 566.8h3v2.4h-3zM970.9 566.9h2.4v3h-2.4zM991.5 567.4h2.4v3h-2.4zM1004.1 567.1h3v2.4h-3zM1040.5 565.8h2.4v3h-2.4zM1053.7 567.2h3v2.4h-3zM1089.2 566.8h3v2.4h-3zM1096.0 566.9h3v2.4h-3zM1111.3 567.1h3v2.4h-3zM1116.3 567.2h3v2.4h-3zM1158.8 567.2h3v2.4h-3zM1180.3 566.8h4.4v4h-4.4zM1186.0 567.0h3v2.4h-3zM1194.8 567.0h3v2.4h-3zM1201.9 566.2h2.4v3h-2.4zM1209.0 567.2h3v2.4h-3zM1222.9 567.7h2.4v3h-2.4z" fill="#a8a08a"/><path d="M985.1 448.4h5v3h-5zM992.9 448.7h5v3h-5zM999.4 448.7h5v3h-5zM1008.7 447.2h3v5h-3zM1021.7 447.2h3v5h-3zM1027.1 447.2h3v5h-3zM1041.6 447.1h5v3h-5zM1050.3 447.1h3v5h-3zM1057.4 447.3h3v5h-3zM1069.5 447.3h3v5h-3zM1076.0 448.3h7v4h-7zM1083.1 447.7h5v3h-5zM1104.2 447.8h5v3h-5zM1111.4 449.4h5v3h-5zM1120.5 447.3h3v5h-3zM1125.5 448.4h5v3h-5zM1132.9 448.3h5v3h-5zM1139.0 449.1h5v3h-5zM1146.7 447.0h3v5h-3zM1155.4 447.1h3v5h-3zM1162.1 447.4h3v5h-3zM1174.8 447.9h5v3h-5zM1183.0 447.5h3v5h-3zM1188.5 449.1h5v3h-5zM1195.3 449.1h5v3h-5zM1202.8 448.3h5v3h-5zM1210.9 447.4h3v5h-3zM1216.8 447.0h3v5h-3zM1223.2 447.2h5v3h-5zM1237.1 449.1h5v3h-5zM985.3 453.5h5v6h-5zM992.8 453.5h5v6h-5zM999.6 454.0h5v3h-5zM1007.6 453.5h3v5h-3zM1013.2 453.8h3v5h-3zM1020.6 454.1h5v3h-5zM1037.0 453.5h3v5h-3zM1041.7 454.6h5v3h-5zM1048.2 455.3h5v3h-5zM1055.2 454.2h5v3h-5zM1064.8 454.0h3v5h-3zM1069.0 455.7h5v3h-5zM1076.2 455.1h5v3h-5zM1083.4 455.7h5v3h-5zM1090.0 454.7h7v4h-7zM1111.1 453.8h5v3h-5zM1118.0 455.8h5v3h-5zM1141.4 453.9h3v5h-3zM1146.4 453.5h5v3h-5zM1153.0 454.3h7v4h-7zM1161.5 453.8h3v5h-3zM1167.3 453.8h3v5h-3zM1174.6 455.3h5v3h-5zM1181.5 453.5h5v6h-5zM1188.7 454.7h5v3h-5zM1203.0 454.1h5v3h-5zM1211.2 453.5h3v5h-3zM1223.0 454.9h7v4h-7zM1232.8 453.6h3v5h-3zM1238.0 453.5h5v6h-5zM985.1 462.0h5v3h-5zM1001.5 460.3h3v5h-3zM1006.1 460.0h5v6h-5zM1013.0 462.1h5v3h-5zM1020.2 461.1h5v3h-5zM1034.0 461.3h7v4h-7zM1041.8 460.4h5v3h-5zM1055.0 461.0h7v4h-7zM1062.6 461.6h5v3h-5zM1071.5 460.4h3v5h-3zM1078.6 460.1h3v5h-3zM1083.9 460.2h3v5h-3zM1090.7 462.3h5v3h-5zM1097.8 460.1h3v5h-3zM1104.9 460.8h5v3h-5zM1112.6 460.1h3v5h-3zM1119.6 460.5h3v5h-3zM1127.8 460.2h3v5h-3zM1132.2 460.0h5v6h-5zM1140.0 460.4h5v3h-5zM1148.3 460.1h3v5h-3zM1153.8 460.5h3v5h-3zM1162.1 460.2h3v5h-3zM1167.1 460.3h5v3h-5zM1181.2 460.3h5v3h-5zM1190.2 460.0h3v5h-3zM1195.8 460.0h5v6h-5zM1202.0 460.1h3v5h-3zM1211.0 460.1h3v5h-3zM1218.0 460.3h3v5h-3zM1223.1 462.4h5v3h-5zM1230.3 460.9h5v3h-5zM1237.3 461.0h5v3h-5zM985.4 467.4h5v3h-5zM992.7 466.5h5v6h-5zM999.0 467.6h7v4h-7zM1006.2 467.6h5v3h-5zM1013.9 467.9h5v3h-5zM1022.6 467.0h3v5h-3zM1027.7 466.6h3v5h-3zM1034.9 467.7h5v3h-5zM1041.2 468.2h5v3h-5zM1048.5 466.5h3v5h-3zM1055.7 467.8h5v3h-5zM1062.4 466.9h3v5h-3zM1071.7 466.6h3v5h-3zM1076.2 466.5h5v6h-5zM1083.6 468.8h5v3h-5zM1090.2 467.7h5v3h-5zM1104.6 466.9h3v5h-3zM1118.3 467.5h5v3h-5zM1125.2 468.6h5v3h-5zM1132.6 468.3h5v3h-5zM1139.1 466.8h5v3h-5zM1146.2 466.5h5v6h-5zM1153.7 468.7h5v3h-5zM1160.2 467.0h3v5h-3zM1168.0 468.7h5v3h-5zM1176.0 466.8h3v5h-3zM1183.4 466.9h3v5h-3zM1188.6 467.0h5v3h-5zM1195.5 468.2h5v3h-5zM1204.0 466.9h3v5h-3zM1210.9 466.6h3v5h-3zM1217.0 467.0h5v3h-5zM1239.0 466.9h3v5h-3zM985.0 473.3h5v3h-5zM992.9 474.4h5v3h-5zM999.5 473.0h5v3h-5zM1006.8 475.1h5v3h-5zM1013.6 473.4h3v5h-3zM1022.5 473.4h3v5h-3zM1027.7 473.7h5v3h-5zM1034.0 473.6h5v3h-5zM1041.1 473.0h5v6h-5zM1048.3 474.0h5v3h-5zM1055.0 473.1h7v4h-7zM1062.7 473.9h5v3h-5zM1069.2 473.1h3v5h-3zM1078.4 473.4h3v5h-3zM1083.8 475.0h5v3h-5zM1090.4 473.1h3v5h-3zM1097.8 473.2h3v5h-3zM1104.2 473.7h5v3h-5zM1111.6 473.2h3v5h-3zM1118.8 475.1h5v3h-5zM1132.7 473.1h5v3h-5zM1139.2 475.3h5v3h-5zM1146.0 473.8h7v4h-7zM1153.3 473.0h3v5h-3zM1160.2 473.8h5v3h-5zM1168.3 473.5h3v5h-3zM1174.6 473.7h5v3h-5zM1195.3 473.2h5v3h-5zM1202.0 473.1h7v4h-7zM1209.1 473.3h5v3h-5zM1216.5 473.1h3v5h-3zM1223.0 474.5h7v4h-7zM1232.7 473.2h3v5h-3zM1237.7 474.8h5v3h-5z" fill="#cdcdc6"/><path d="M994.2 448.7h2.4v3h-2.4zM1008.7 448.5h3v2.4h-3zM1027.1 448.5h3v2.4h-3zM1042.9 447.1h2.4v3h-2.4zM1057.4 448.6h3v2.4h-3zM1077.3 448.3h4.4v4h-4.4zM1084.4 447.7h2.4v3h-2.4zM1105.5 447.8h2.4v3h-2.4zM1112.7 449.4h2.4v3h-2.4zM1134.2 448.3h2.4v3h-2.4zM1155.4 448.4h3v2.4h-3zM1162.1 448.7h3v2.4h-3zM1176.1 447.9h2.4v3h-2.4zM1183.0 448.8h3v2.4h-3zM1210.9 448.7h3v2.4h-3zM1238.4 449.1h2.4v3h-2.4zM985.3 454.8h5v3.4h-5zM992.8 454.8h5v3.4h-5zM1043.0 454.6h2.4v3h-2.4zM1141.4 455.2h3v2.4h-3zM1154.3 454.3h4.4v4h-4.4zM1161.5 455.1h3v2.4h-3zM1167.3 455.1h3v2.4h-3zM1175.9 455.3h2.4v3h-2.4zM1190.0 454.7h2.4v3h-2.4zM1204.3 454.1h2.4v3h-2.4zM1211.2 454.8h3v2.4h-3zM1224.3 454.9h4.4v4h-4.4zM1232.8 454.9h3v2.4h-3zM1238.0 454.8h5v3.4h-5zM1006.1 461.3h5v3.4h-5zM1021.5 461.1h2.4v3h-2.4zM1071.5 461.7h3v2.4h-3zM1083.9 461.5h3v2.4h-3zM1097.8 461.4h3v2.4h-3zM1119.6 461.8h3v2.4h-3zM1141.3 460.4h2.4v3h-2.4zM1148.3 461.4h3v2.4h-3zM1162.1 461.5h3v2.4h-3zM1182.5 460.3h2.4v3h-2.4zM1211.0 461.4h3v2.4h-3zM1218.0 461.6h3v2.4h-3zM1224.4 462.4h2.4v3h-2.4zM992.7 467.8h5v3.4h-5zM1000.3 467.6h4.4v4h-4.4zM1007.5 467.6h2.4v3h-2.4zM1015.2 467.9h2.4v3h-2.4zM1042.5 468.2h2.4v3h-2.4zM1057.0 467.8h2.4v3h-2.4zM1071.7 467.9h3v2.4h-3zM1076.2 467.8h5v3.4h-5zM1084.9 468.8h2.4v3h-2.4zM1104.6 468.2h3v2.4h-3zM1119.6 467.5h2.4v3h-2.4zM1126.5 468.6h2.4v3h-2.4zM1133.9 468.3h2.4v3h-2.4zM1160.2 468.3h3v2.4h-3zM1169.3 468.7h2.4v3h-2.4zM1176.0 468.1h3v2.4h-3zM1196.8 468.2h2.4v3h-2.4zM1204.0 468.2h3v2.4h-3zM1218.3 467.0h2.4v3h-2.4zM1239.0 468.2h3v2.4h-3zM986.3 473.3h2.4v3h-2.4zM994.2 474.4h2.4v3h-2.4zM1013.6 474.7h3v2.4h-3zM1029.0 473.7h2.4v3h-2.4zM1035.3 473.6h2.4v3h-2.4zM1078.4 474.7h3v2.4h-3zM1085.1 475.0h2.4v3h-2.4zM1147.3 473.8h4.4v4h-4.4zM1153.3 474.3h3v2.4h-3zM1175.9 473.7h2.4v3h-2.4zM1210.4 473.3h2.4v3h-2.4zM1224.3 474.5h4.4v4h-4.4zM1239.0 474.8h2.4v3h-2.4z" fill="#a8a08a"/><path d="M1029.0 441.4h5v3h-5zM1035.3 441.5h5v3h-5zM1077.1 441.6h5v3h-5zM1154.8 443.0h5v3h-5zM1161.1 441.8h5v3h-5zM1175.0 441.3h7v4h-7z" fill="#cdcdc6"/><path d="M1036.6 441.5h2.4v3h-2.4zM1162.4 441.8h2.4v3h-2.4z" fill="#a8a08a"/><path d="M1030.7 284.8h5v3h-5zM1037.8 285.3h5v3h-5zM1044.6 284.2h3v5h-3zM1058.0 285.5h5v3h-5zM1065.0 285.2h7v4h-7zM1072.8 284.5h5v3h-5zM1086.9 284.5h5v3h-5zM1094.6 284.3h3v5h-3zM1101.7 284.4h3v5h-3zM1115.1 284.5h3v5h-3zM1032.7 291.0h3v5h-3zM1044.8 291.6h5v3h-5zM1051.5 291.7h5v3h-5zM1058.7 291.1h5v3h-5zM1065.9 291.0h5v3h-5zM1074.1 290.6h3v5h-3zM1086.3 290.5h3v5h-3zM1093.6 293.0h5v3h-5zM1100.2 291.5h5v3h-5zM1107.1 291.0h5v3h-5zM1114.4 292.9h5v3h-5zM1037.1 297.4h5v3h-5zM1045.1 297.2h3v5h-3zM1051.9 298.4h5v3h-5zM1059.9 297.5h3v5h-3zM1065.7 298.8h5v3h-5zM1072.8 298.5h5v3h-5zM1080.2 297.1h3v5h-3zM1086.3 297.0h5v6h-5zM1094.6 297.5h3v5h-3zM1100.6 299.0h5v3h-5zM1107.9 298.3h5v3h-5zM1116.1 297.0h3v5h-3zM1030.2 303.5h5v6h-5zM1039.8 303.8h3v5h-3zM1044.6 303.9h3v5h-3zM1051.8 305.0h5v3h-5zM1058.0 304.6h7v4h-7zM1065.6 305.2h5v3h-5zM1073.2 303.6h3v5h-3zM1093.2 304.4h5v3h-5zM1100.1 303.7h3v5h-3zM1107.6 304.3h5v3h-5zM1030.4 310.1h3v5h-3zM1037.8 311.3h5v3h-5zM1044.6 311.8h5v3h-5zM1072.3 312.3h5v3h-5zM1081.1 310.2h3v5h-3zM1088.6 310.2h3v5h-3zM1100.4 310.4h3v5h-3zM1114.1 311.9h5v3h-5zM1030.4 318.3h5v3h-5zM1037.5 316.5h5v6h-5zM1044.9 318.9h5v3h-5zM1053.3 316.7h3v5h-3zM1058.4 316.9h3v5h-3zM1065.5 318.4h5v3h-5zM1072.8 316.6h5v3h-5zM1079.1 316.7h3v5h-3zM1088.8 316.6h3v5h-3zM1093.5 317.3h5v3h-5zM1109.7 316.6h3v5h-3zM1115.9 316.8h3v5h-3zM1030.8 324.7h5v3h-5zM1038.0 325.3h5v3h-5zM1044.5 323.1h3v5h-3zM1051.6 324.9h5v3h-5zM1060.9 323.5h3v5h-3zM1066.6 323.2h3v5h-3zM1072.6 324.4h5v3h-5zM1079.6 324.4h5v3h-5zM1086.3 325.4h5v3h-5zM1100.2 324.3h5v3h-5zM1109.8 323.5h3v5h-3zM1114.0 324.5h7v4h-7zM1030.9 331.0h5v3h-5zM1037.8 329.8h5v3h-5zM1045.0 330.0h3v5h-3zM1052.0 329.8h5v3h-5zM1058.7 331.9h5v3h-5zM1074.2 329.8h3v5h-3zM1086.1 331.0h5v3h-5zM1094.7 329.7h3v5h-3zM1100.2 331.4h5v3h-5zM1107.0 330.1h7v4h-7zM1114.8 330.6h5v3h-5zM1037.0 336.5h7v4h-7zM1044.5 338.3h5v3h-5zM1051.9 337.8h5v3h-5zM1058.0 337.0h7v4h-7zM1065.3 336.3h5v3h-5zM1074.0 336.2h3v5h-3zM1079.2 336.0h5v6h-5zM1087.0 336.1h3v5h-3zM1093.4 336.4h5v3h-5zM1100.3 336.3h3v5h-3zM1109.4 336.1h3v5h-3zM1114.0 336.2h7v4h-7zM1030.1 342.9h3v5h-3zM1037.0 343.6h7v4h-7zM1044.3 344.9h5v3h-5zM1051.9 344.1h5v3h-5zM1058.4 342.5h5v6h-5zM1066.0 343.3h5v3h-5zM1074.9 342.8h3v5h-3zM1079.5 343.3h5v3h-5zM1086.8 342.8h3v5h-3zM1094.6 342.6h3v5h-3zM1100.7 343.0h3v5h-3zM1107.7 344.5h5v3h-5zM1114.4 343.3h5v3h-5zM1030.7 349.4h3v5h-3zM1037.8 349.0h3v5h-3zM1046.0 349.5h3v5h-3zM1051.0 350.1h7v4h-7zM1058.7 351.2h5v3h-5zM1065.3 351.4h5v3h-5zM1072.9 349.8h5v3h-5zM1079.8 349.9h5v3h-5zM1093.3 349.1h5v3h-5zM1100.8 349.8h5v3h-5zM1107.0 349.9h7v4h-7zM1114.7 349.3h3v5h-3zM1030.6 357.0h5v3h-5zM1037.4 356.4h5v3h-5zM1046.6 355.6h3v5h-3zM1051.8 356.2h5v3h-5zM1058.4 355.5h5v6h-5zM1066.2 355.9h3v5h-3zM1075.0 355.5h3v5h-3zM1079.0 356.1h7v4h-7zM1086.5 358.0h5v3h-5zM1093.9 356.0h5v3h-5zM1100.6 356.2h5v3h-5zM1114.5 356.3h5v3h-5zM1031.0 362.9h5v3h-5zM1038.3 362.2h3v5h-3zM1044.4 363.8h5v3h-5zM1053.0 362.2h3v5h-3zM1058.7 362.6h5v3h-5zM1066.5 362.2h3v5h-3zM1072.1 362.8h5v3h-5zM1080.7 362.1h3v5h-3zM1087.1 362.2h3v5h-3zM1093.6 362.0h5v6h-5zM1107.2 364.1h5v3h-5zM1116.5 362.3h3v5h-3zM1030.3 368.6h5v3h-5zM1037.1 368.9h5v3h-5zM1046.6 369.0h3v5h-3zM1051.8 370.3h5v3h-5zM1059.8 368.9h3v5h-3zM1065.5 369.0h5v3h-5zM1072.7 368.8h3v5h-3zM1079.4 369.8h5v3h-5zM1088.6 368.7h3v5h-3zM1094.2 368.8h3v5h-3zM1107.6 368.9h3v5h-3zM1114.6 369.7h5v3h-5zM1030.0 377.0h5v3h-5zM1038.9 375.1h3v5h-3zM1046.0 375.4h3v5h-3zM1051.3 375.2h3v5h-3zM1058.4 375.4h5v3h-5zM1065.5 376.1h5v3h-5zM1072.2 375.1h5v3h-5zM1081.3 375.2h3v5h-3zM1087.1 375.2h3v5h-3zM1094.7 375.4h3v5h-3zM1100.2 375.0h5v6h-5zM1107.3 376.2h5v3h-5zM1114.2 375.0h5v6h-5zM1033.0 381.6h3v5h-3zM1037.4 382.3h5v3h-5zM1051.8 383.6h5v3h-5zM1058.4 383.2h5v3h-5zM1066.7 381.9h3v5h-3zM1072.0 381.8h3v5h-3zM1079.0 382.6h7v4h-7zM1088.0 381.5h3v5h-3zM1093.4 381.8h3v5h-3zM1100.8 381.8h5v3h-5zM1107.7 381.5h5v6h-5zM1114.4 381.8h3v5h-3zM1038.0 388.8h5v3h-5zM1044.3 388.3h5v3h-5zM1052.3 388.4h3v5h-3zM1060.8 388.4h3v5h-3zM1065.0 389.4h7v4h-7zM1072.9 388.0h5v6h-5zM1079.1 389.2h5v3h-5zM1086.0 388.3h7v4h-7zM1093.8 388.1h3v5h-3zM1100.9 388.0h5v6h-5zM1107.0 388.9h7v4h-7zM1114.4 388.7h5v3h-5zM1030.1 396.5h5v3h-5zM1037.5 396.3h5v3h-5zM1046.9 394.9h3v5h-3zM1058.6 395.0h3v5h-3zM1065.9 394.5h5v6h-5zM1072.7 394.7h5v3h-5zM1079.7 394.6h5v3h-5zM1093.7 396.4h5v3h-5zM1100.6 395.0h3v5h-3zM1109.5 394.6h3v5h-3zM1116.6 394.6h3v5h-3zM1030.8 403.1h5v3h-5zM1037.6 401.5h5v3h-5zM1044.2 403.1h5v3h-5zM1051.4 401.0h5v3h-5zM1058.4 401.0h5v3h-5zM1065.0 402.1h7v4h-7zM1073.0 401.9h5v3h-5zM1079.0 402.8h5v3h-5zM1086.5 401.3h3v5h-3zM1093.6 402.9h5v3h-5zM1101.7 401.2h3v5h-3zM1107.7 403.3h5v3h-5zM1115.3 401.2h3v5h-3zM1030.8 408.1h5v3h-5zM1037.0 408.0h7v4h-7zM1051.5 408.0h3v5h-3zM1058.0 408.1h7v4h-7zM1066.8 407.6h3v5h-3zM1072.5 408.3h5v3h-5zM1086.0 407.6h7v4h-7zM1095.5 407.8h3v5h-3zM1100.6 407.7h5v3h-5zM1107.1 409.3h5v3h-5zM1114.9 410.0h5v3h-5zM1030.8 414.5h3v5h-3zM1037.4 414.7h5v3h-5zM1044.9 415.4h5v3h-5zM1051.5 414.0h5v6h-5zM1065.5 415.8h5v3h-5zM1072.1 416.0h5v3h-5zM1080.1 414.1h3v5h-3zM1087.8 414.5h3v5h-3zM1101.0 414.4h3v5h-3zM1107.1 414.1h3v5h-3zM1031.6 421.0h3v5h-3zM1037.0 421.6h7v4h-7zM1044.4 420.9h3v5h-3zM1051.7 420.5h3v5h-3zM1058.8 422.1h5v3h-5zM1072.9 420.8h3v5h-3zM1079.8 420.8h3v5h-3zM1088.1 420.8h3v5h-3zM1093.3 420.6h3v5h-3zM1100.3 420.7h3v5h-3zM1107.1 422.2h5v3h-5zM1115.2 420.7h3v5h-3zM1030.7 429.0h5v3h-5zM1037.3 427.7h5v3h-5zM1044.9 428.6h5v3h-5zM1052.3 427.3h3v5h-3zM1058.0 428.2h7v4h-7zM1066.1 427.4h3v5h-3zM1072.7 429.3h5v3h-5zM1080.3 427.2h3v5h-3zM1100.9 427.0h5v6h-5zM1107.8 427.0h5v6h-5zM1114.5 428.0h5v3h-5zM1051.4 434.4h5v3h-5zM1093.8 434.3h5v3h-5zM1114.8 434.6h5v3h-5z" fill="#cdcdc6"/><path d="M1044.6 285.5h3v2.4h-3zM1059.3 285.5h2.4v3h-2.4zM1088.2 284.5h2.4v3h-2.4zM1101.7 285.7h3v2.4h-3zM1115.1 285.8h3v2.4h-3zM1052.8 291.7h2.4v3h-2.4zM1060.0 291.1h2.4v3h-2.4zM1094.9 293.0h2.4v3h-2.4zM1108.4 291.0h2.4v3h-2.4zM1038.4 297.4h2.4v3h-2.4zM1045.1 298.5h3v2.4h-3zM1053.2 298.4h2.4v3h-2.4zM1059.9 298.8h3v2.4h-3zM1080.2 298.4h3v2.4h-3zM1101.9 299.0h2.4v3h-2.4zM1109.2 298.3h2.4v3h-2.4zM1116.1 298.3h3v2.4h-3zM1030.2 304.8h5v3.4h-5zM1073.2 304.9h3v2.4h-3zM1108.9 304.3h2.4v3h-2.4zM1030.4 311.4h3v2.4h-3zM1039.1 311.3h2.4v3h-2.4zM1045.9 311.8h2.4v3h-2.4zM1088.6 311.5h3v2.4h-3zM1115.4 311.9h2.4v3h-2.4zM1031.7 318.3h2.4v3h-2.4zM1037.5 317.8h5v3.4h-5zM1058.4 318.2h3v2.4h-3zM1066.8 318.4h2.4v3h-2.4zM1088.8 317.9h3v2.4h-3zM1094.8 317.3h2.4v3h-2.4zM1039.3 325.3h2.4v3h-2.4zM1060.9 324.8h3v2.4h-3zM1066.6 324.5h3v2.4h-3zM1087.6 325.4h2.4v3h-2.4zM1101.5 324.3h2.4v3h-2.4zM1115.3 324.5h4.4v4h-4.4zM1045.0 331.3h3v2.4h-3zM1074.2 331.1h3v2.4h-3zM1101.5 331.4h2.4v3h-2.4zM1108.3 330.1h4.4v4h-4.4zM1038.3 336.5h4.4v4h-4.4zM1045.8 338.3h2.4v3h-2.4zM1053.2 337.8h2.4v3h-2.4zM1059.3 337.0h4.4v4h-4.4zM1079.2 337.3h5v3.4h-5zM1094.7 336.4h2.4v3h-2.4zM1038.3 343.6h4.4v4h-4.4zM1045.6 344.9h2.4v3h-2.4zM1053.2 344.1h2.4v3h-2.4zM1058.4 343.8h5v3.4h-5zM1080.8 343.3h2.4v3h-2.4zM1115.7 343.3h2.4v3h-2.4zM1037.8 350.3h3v2.4h-3zM1066.6 351.4h2.4v3h-2.4zM1081.1 349.9h2.4v3h-2.4zM1094.6 349.1h2.4v3h-2.4zM1108.3 349.9h4.4v4h-4.4zM1066.2 357.2h3v2.4h-3zM1080.3 356.1h4.4v4h-4.4zM1087.8 358.0h2.4v3h-2.4zM1101.9 356.2h2.4v3h-2.4zM1115.8 356.3h2.4v3h-2.4zM1032.3 362.9h2.4v3h-2.4zM1038.3 363.5h3v2.4h-3zM1045.7 363.8h2.4v3h-2.4zM1080.7 363.4h3v2.4h-3zM1031.6 368.6h2.4v3h-2.4zM1038.4 368.9h2.4v3h-2.4zM1046.6 370.3h3v2.4h-3zM1053.1 370.3h2.4v3h-2.4zM1059.8 370.2h3v2.4h-3zM1072.7 370.1h3v2.4h-3zM1088.6 370.0h3v2.4h-3zM1094.2 370.1h3v2.4h-3zM1107.6 370.2h3v2.4h-3zM1115.9 369.7h2.4v3h-2.4zM1031.3 377.0h2.4v3h-2.4zM1046.0 376.7h3v2.4h-3zM1059.7 375.4h2.4v3h-2.4zM1087.1 376.5h3v2.4h-3zM1094.7 376.7h3v2.4h-3zM1100.2 376.3h5v3.4h-5zM1108.6 376.2h2.4v3h-2.4zM1114.2 376.3h5v3.4h-5zM1033.0 382.9h3v2.4h-3zM1038.7 382.3h2.4v3h-2.4zM1066.7 383.2h3v2.4h-3zM1088.0 382.8h3v2.4h-3zM1093.4 383.1h3v2.4h-3zM1107.7 382.8h5v3.4h-5zM1114.4 383.1h3v2.4h-3zM1045.6 388.3h2.4v3h-2.4zM1052.3 389.7h3v2.4h-3zM1060.8 389.7h3v2.4h-3zM1066.3 389.4h4.4v4h-4.4zM1072.9 389.3h5v3.4h-5zM1080.4 389.2h2.4v3h-2.4zM1038.8 396.3h2.4v3h-2.4zM1065.9 395.8h5v3.4h-5zM1081.0 394.6h2.4v3h-2.4zM1038.9 401.5h2.4v3h-2.4zM1045.5 403.1h2.4v3h-2.4zM1052.7 401.0h2.4v3h-2.4zM1086.5 402.6h3v2.4h-3zM1051.5 409.3h3v2.4h-3zM1066.8 408.9h3v2.4h-3zM1087.3 407.6h4.4v4h-4.4zM1073.4 416.0h2.4v3h-2.4zM1101.0 415.7h3v2.4h-3zM1031.6 422.3h3v2.4h-3zM1079.8 422.1h3v2.4h-3zM1088.1 422.1h3v2.4h-3zM1108.4 422.2h2.4v3h-2.4zM1115.2 422.0h3v2.4h-3zM1059.3 428.2h4.4v4h-4.4zM1107.8 428.3h5v3.4h-5zM1115.8 428.0h2.4v3h-2.4zM1052.7 434.4h2.4v3h-2.4zM1095.1 434.3h2.4v3h-2.4z" fill="#a8a08a"/><path d="M1079.0 310.2h3v5h-3zM1085.6 310.3h3v5h-3zM1091.0 311.1h5v3h-5zM1098.7 310.4h3v5h-3zM1105.6 312.0h5v3h-5zM1112.9 310.0h5v6h-5zM1119.6 310.4h3v5h-3zM1077.0 316.8h7v4h-7zM1084.8 318.1h5v3h-5zM1092.6 316.8h3v5h-3zM1098.1 317.4h5v3h-5zM1105.1 318.4h5v3h-5zM1112.3 318.7h5v3h-5zM1120.7 316.6h3v5h-3zM1084.2 324.1h5v3h-5zM1091.0 323.4h3v5h-3zM1098.1 323.4h5v3h-5zM1105.5 324.9h5v3h-5zM1113.7 323.2h3v5h-3zM1119.3 323.5h3v5h-3z" fill="#cdcdc6"/><path d="M1085.6 311.6h3v2.4h-3zM1098.7 311.7h3v2.4h-3zM1086.1 318.1h2.4v3h-2.4zM1106.4 318.4h2.4v3h-2.4zM1091.0 324.7h3v2.4h-3zM1099.4 323.4h2.4v3h-2.4zM1113.7 324.5h3v2.4h-3z" fill="#a8a08a"/><path d="M1137.6 304.4h3v5h-3zM1144.9 304.2h3v5h-3zM1150.3 304.0h5v6h-5zM1157.1 305.6h5v3h-5zM1164.5 306.3h5v3h-5zM1173.9 304.4h3v5h-3zM1178.8 304.0h5v6h-5zM1185.1 306.0h5v3h-5zM1194.3 304.0h3v5h-3zM1201.4 304.2h3v5h-3zM1206.0 305.0h7v4h-7zM1235.8 304.0h3v5h-3zM1241.8 304.0h3v5h-3zM1248.0 305.1h7v4h-7zM1256.7 304.1h3v5h-3zM1136.0 310.7h7v4h-7zM1150.5 311.7h5v3h-5zM1157.9 310.5h5v6h-5zM1164.6 312.7h5v3h-5zM1171.0 310.7h3v5h-3zM1178.0 311.2h7v4h-7zM1185.9 310.9h3v5h-3zM1192.5 310.7h3v5h-3zM1213.0 311.6h7v4h-7zM1222.8 310.8h3v5h-3zM1227.6 310.8h5v3h-5zM1234.4 311.5h5v3h-5zM1241.0 310.5h5v6h-5zM1248.7 310.5h3v5h-3zM1262.1 312.7h5v3h-5zM1136.8 318.2h5v3h-5zM1145.6 317.1h3v5h-3zM1157.0 318.1h7v4h-7zM1171.9 318.5h5v3h-5zM1178.9 318.8h5v3h-5zM1185.3 318.1h5v3h-5zM1194.8 317.5h3v5h-3zM1199.6 318.6h5v3h-5zM1206.2 317.8h5v3h-5zM1220.3 319.0h5v3h-5zM1227.2 317.5h5v3h-5zM1234.8 318.0h5v3h-5zM1242.3 317.5h3v5h-3zM1255.8 317.1h3v5h-3zM1263.6 317.1h3v5h-3zM1136.0 323.9h3v5h-3zM1143.8 324.9h5v3h-5zM1150.3 325.5h5v3h-5zM1157.3 323.5h3v5h-3zM1165.8 323.7h3v5h-3zM1178.0 323.9h7v4h-7zM1187.7 323.6h3v5h-3zM1193.9 323.8h3v5h-3zM1199.0 325.0h5v3h-5zM1206.2 323.9h5v3h-5zM1215.6 323.6h3v5h-3zM1221.7 323.9h3v5h-3zM1227.0 324.3h5v3h-5zM1234.3 323.5h5v6h-5zM1242.2 323.6h3v5h-3zM1248.4 323.8h5v3h-5zM1257.4 323.5h3v5h-3zM1151.7 330.1h3v5h-3zM1158.2 330.3h3v5h-3zM1166.6 330.2h3v5h-3zM1172.0 330.1h3v5h-3zM1179.0 330.3h3v5h-3zM1194.6 330.4h3v5h-3zM1199.8 330.8h5v3h-5zM1206.8 330.0h5v6h-5zM1213.1 332.3h5v3h-5zM1222.4 330.3h3v5h-3zM1227.8 330.4h5v3h-5zM1234.9 331.9h5v3h-5zM1241.8 331.7h5v3h-5zM1248.4 332.2h5v3h-5zM1256.6 330.5h3v5h-3zM1136.1 337.3h5v3h-5zM1150.1 336.6h3v5h-3zM1157.4 336.7h5v3h-5zM1171.6 337.4h5v3h-5zM1185.1 336.5h5v6h-5zM1194.9 336.6h3v5h-3zM1199.0 337.0h7v4h-7zM1208.2 336.8h3v5h-3zM1213.0 337.7h5v3h-5zM1222.6 336.9h3v5h-3zM1228.0 336.8h5v3h-5zM1234.1 338.6h5v3h-5zM1249.0 338.0h5v3h-5zM1258.0 337.0h3v5h-3zM1264.9 336.6h3v5h-3zM1144.7 343.5h3v5h-3zM1157.4 343.0h5v6h-5zM1166.1 343.3h3v5h-3zM1178.4 343.0h3v5h-3zM1186.0 345.3h5v3h-5zM1194.2 343.3h3v5h-3zM1199.6 343.4h3v5h-3zM1206.9 343.0h5v6h-5zM1213.0 343.0h3v5h-3zM1220.9 345.2h5v3h-5zM1228.1 343.0h3v5h-3zM1234.6 343.0h3v5h-3zM1242.0 343.8h5v3h-5zM1248.7 343.8h5v3h-5zM1255.5 345.3h5v3h-5zM1262.4 343.3h3v5h-3zM1136.6 350.6h5v3h-5zM1146.0 349.8h3v5h-3zM1150.7 349.8h3v5h-3zM1159.0 349.9h3v5h-3zM1164.3 349.5h5v6h-5zM1171.0 349.5h3v5h-3zM1178.6 350.0h5v3h-5zM1186.9 349.8h3v5h-3zM1192.3 351.7h5v3h-5zM1199.8 349.8h5v3h-5zM1207.3 350.0h3v5h-3zM1220.0 349.5h5v6h-5zM1227.9 350.8h5v3h-5zM1234.0 350.9h7v4h-7zM1241.0 350.7h7v4h-7zM1248.0 350.8h7v4h-7zM1255.1 350.3h5v3h-5zM1137.7 356.5h3v5h-3zM1158.0 356.2h3v5h-3zM1164.0 356.7h7v4h-7zM1172.2 356.4h3v5h-3zM1186.7 356.2h3v5h-3zM1192.1 356.1h5v3h-5zM1201.2 356.4h3v5h-3zM1206.8 356.1h3v5h-3zM1213.8 356.3h3v5h-3zM1222.7 356.3h3v5h-3zM1227.0 356.5h3v5h-3zM1234.7 356.3h5v3h-5zM1241.4 356.5h5v3h-5zM1248.4 356.9h5v3h-5zM1256.5 356.0h3v5h-3zM1136.9 362.8h5v3h-5zM1143.6 364.2h5v3h-5zM1150.0 363.8h7v4h-7zM1165.0 362.6h3v5h-3zM1186.7 362.8h3v5h-3zM1192.2 362.8h5v3h-5zM1201.6 362.9h3v5h-3zM1206.1 362.7h5v3h-5zM1220.6 363.8h5v3h-5zM1227.2 362.9h3v5h-3zM1236.8 362.7h3v5h-3zM1243.3 362.8h3v5h-3zM1250.3 362.6h3v5h-3zM1255.2 364.3h5v3h-5zM1265.0 363.0h3v5h-3zM1138.8 369.2h3v5h-3zM1143.3 369.3h5v3h-5zM1150.3 370.3h5v3h-5zM1157.0 370.5h7v4h-7zM1164.5 371.0h5v3h-5zM1171.4 370.0h5v3h-5zM1179.9 369.3h3v5h-3zM1185.5 370.5h5v3h-5zM1192.3 371.3h5v3h-5zM1199.8 369.2h3v5h-3zM1206.1 370.0h5v3h-5zM1213.9 369.0h5v6h-5zM1220.8 369.1h3v5h-3zM1227.6 371.2h5v3h-5zM1234.0 370.4h7v4h-7zM1243.9 369.3h3v5h-3zM1255.0 369.9h7v4h-7zM1262.5 369.8h5v3h-5zM1157.3 377.4h5v3h-5zM1166.7 375.7h3v5h-3zM1171.6 375.6h3v5h-3zM1178.8 375.5h5v6h-5zM1185.1 375.5h3v5h-3zM1194.2 375.5h3v5h-3zM1199.4 376.3h5v3h-5zM1206.0 375.9h7v4h-7zM1235.4 376.0h3v5h-3zM1241.0 376.4h7v4h-7zM1248.3 376.2h5v3h-5zM1256.7 375.8h3v5h-3zM1263.6 375.6h3v5h-3zM1136.0 383.2h7v4h-7zM1143.7 382.3h3v5h-3zM1151.0 383.6h5v3h-5zM1157.7 382.1h5v3h-5zM1165.4 382.3h3v5h-3zM1171.7 382.4h3v5h-3zM1178.9 384.3h5v3h-5zM1185.9 382.0h5v6h-5zM1193.1 382.4h3v5h-3zM1199.3 382.1h5v3h-5zM1208.8 382.2h3v5h-3zM1213.5 382.0h5v3h-5zM1221.4 382.5h3v5h-3zM1227.6 383.6h5v3h-5zM1234.6 382.1h5v3h-5zM1248.9 384.2h5v3h-5zM1262.3 382.4h5v3h-5zM1136.0 389.9h7v4h-7zM1151.0 388.6h3v5h-3zM1159.7 388.9h3v5h-3zM1171.2 388.9h3v5h-3zM1186.0 388.8h3v5h-3zM1192.7 389.1h5v3h-5zM1199.3 388.5h5v6h-5zM1206.0 389.8h7v4h-7zM1214.4 388.8h3v5h-3zM1220.3 388.5h5v6h-5zM1228.2 388.8h3v5h-3zM1234.9 390.1h5v3h-5zM1249.8 388.9h3v5h-3zM1262.8 388.7h3v5h-3zM1137.5 395.3h3v5h-3zM1143.5 396.2h5v3h-5zM1152.8 395.5h3v5h-3zM1157.4 395.0h5v6h-5zM1171.9 395.1h5v3h-5zM1186.2 395.2h3v5h-3zM1193.0 395.0h3v5h-3zM1199.1 395.0h5v6h-5zM1207.9 395.0h3v5h-3zM1214.0 397.1h5v3h-5zM1229.4 395.3h3v5h-3zM1234.9 397.0h5v3h-5zM1248.1 397.4h5v3h-5zM1256.9 395.2h3v5h-3zM1136.4 401.6h3v5h-3zM1143.0 401.7h7v4h-7zM1150.3 401.5h5v6h-5zM1157.5 402.2h5v3h-5zM1164.4 403.3h5v3h-5zM1171.3 402.6h5v3h-5zM1178.4 403.3h5v3h-5zM1187.0 401.7h3v5h-3zM1192.2 403.2h5v3h-5zM1206.1 403.2h5v3h-5zM1214.3 401.8h3v5h-3zM1220.9 402.4h5v3h-5zM1228.1 401.7h3v5h-3zM1234.0 402.3h7v4h-7zM1136.9 409.5h5v3h-5zM1143.0 408.4h7v4h-7zM1158.7 408.1h3v5h-3zM1165.0 408.0h3v5h-3zM1171.6 408.2h3v5h-3zM1178.1 408.0h5v6h-5zM1185.4 409.4h5v3h-5zM1192.6 408.9h5v3h-5zM1200.1 408.3h3v5h-3zM1206.2 409.4h5v3h-5zM1213.6 410.5h5v3h-5zM1220.5 410.1h5v3h-5zM1234.1 409.5h5v3h-5zM1241.6 409.8h5v3h-5zM1250.7 408.4h3v5h-3zM1256.0 410.4h5v3h-5zM1137.4 414.7h3v5h-3zM1143.1 414.5h3v5h-3zM1150.9 414.5h5v6h-5zM1158.8 414.8h3v5h-3zM1165.2 414.8h3v5h-3zM1172.6 414.7h3v5h-3zM1180.6 414.6h3v5h-3zM1193.0 414.8h3v5h-3zM1199.4 415.5h5v3h-5zM1208.0 414.7h3v5h-3zM1220.6 414.5h3v5h-3zM1227.1 414.6h3v5h-3zM1234.4 415.1h5v3h-5zM1241.3 414.8h3v5h-3zM1249.8 414.6h3v5h-3zM1255.4 414.5h5v6h-5zM1136.8 421.3h3v5h-3zM1143.5 421.4h3v5h-3zM1151.1 421.5h3v5h-3zM1164.2 422.9h5v3h-5zM1171.0 421.5h7v4h-7zM1178.5 421.5h3v5h-3zM1186.0 421.1h3v5h-3zM1192.6 423.1h5v3h-5zM1208.1 421.2h3v5h-3zM1213.8 421.0h5v3h-5zM1221.4 421.2h3v5h-3zM1228.8 421.1h3v5h-3zM1236.6 421.4h3v5h-3zM1241.6 421.3h5v3h-5zM1250.7 421.3h3v5h-3zM1138.6 427.5h3v5h-3zM1144.4 428.0h3v5h-3zM1165.2 427.7h3v5h-3zM1171.8 429.2h5v3h-5zM1178.0 427.7h3v5h-3zM1185.0 428.7h7v4h-7zM1192.8 428.0h3v5h-3zM1201.0 427.6h3v5h-3zM1206.2 429.9h5v3h-5zM1214.6 427.5h3v5h-3zM1221.0 427.6h3v5h-3zM1227.2 427.5h5v6h-5zM1234.0 427.7h7v4h-7zM1242.0 429.0h5v3h-5zM1256.3 427.7h3v5h-3zM1136.7 435.3h5v3h-5zM1145.3 434.3h3v5h-3zM1150.4 435.1h5v3h-5zM1157.8 434.1h3v5h-3zM1178.9 436.4h5v3h-5zM1185.5 434.0h5v3h-5zM1192.4 434.2h3v5h-3zM1199.9 434.1h5v3h-5zM1213.1 434.1h5v3h-5zM1220.1 434.0h3v5h-3zM1227.7 434.2h3v5h-3zM1241.2 434.4h3v5h-3zM1250.3 434.3h3v5h-3zM1255.0 435.3h7v4h-7zM1263.7 434.2h3v5h-3zM1138.4 440.8h3v5h-3zM1143.5 441.2h5v3h-5zM1150.9 440.9h5v3h-5zM1165.0 440.6h3v5h-3zM1171.7 442.7h5v3h-5zM1178.0 441.0h5v3h-5zM1185.0 441.1h7v4h-7zM1192.0 441.6h7v4h-7zM1199.1 442.9h5v3h-5zM1206.4 443.0h5v3h-5zM1213.7 442.5h5v3h-5zM1220.0 440.6h7v4h-7zM1227.9 441.0h3v5h-3zM1234.1 442.5h5v3h-5zM1241.0 441.6h7v4h-7zM1248.2 442.6h5v3h-5zM1255.5 440.5h5v6h-5zM1262.1 440.8h3v5h-3zM1137.1 447.3h3v5h-3zM1151.5 447.0h3v5h-3zM1157.2 447.8h5v3h-5zM1171.5 447.0h5v6h-5zM1178.6 448.6h5v3h-5zM1187.7 447.3h3v5h-3zM1193.0 447.0h5v6h-5zM1199.7 448.7h5v3h-5zM1208.7 447.0h3v5h-3zM1213.2 447.2h3v5h-3zM1227.4 447.4h3v5h-3zM1234.0 447.6h7v4h-7zM1250.0 447.0h3v5h-3zM1255.1 447.7h5v3h-5zM1262.0 447.6h7v4h-7z" fill="#cdcdc6"/><path d="M1137.6 305.7h3v2.4h-3zM1150.3 305.3h5v3.4h-5zM1165.8 306.3h2.4v3h-2.4zM1173.9 305.7h3v2.4h-3zM1207.3 305.0h4.4v4h-4.4zM1249.3 305.1h4.4v4h-4.4zM1256.7 305.4h3v2.4h-3zM1151.8 311.7h2.4v3h-2.4zM1157.9 311.8h5v3.4h-5zM1171.0 312.0h3v2.4h-3zM1185.9 312.2h3v2.4h-3zM1228.9 310.8h2.4v3h-2.4zM1235.7 311.5h2.4v3h-2.4zM1241.0 311.8h5v3.4h-5zM1138.1 318.2h2.4v3h-2.4zM1158.3 318.1h4.4v4h-4.4zM1173.2 318.5h2.4v3h-2.4zM1180.2 318.8h2.4v3h-2.4zM1194.8 318.8h3v2.4h-3zM1200.9 318.6h2.4v3h-2.4zM1221.6 319.0h2.4v3h-2.4zM1228.5 317.5h2.4v3h-2.4zM1242.3 318.8h3v2.4h-3zM1263.6 318.4h3v2.4h-3zM1136.0 325.2h3v2.4h-3zM1145.1 324.9h2.4v3h-2.4zM1157.3 324.8h3v2.4h-3zM1165.8 325.0h3v2.4h-3zM1187.7 324.9h3v2.4h-3zM1193.9 325.1h3v2.4h-3zM1200.3 325.0h2.4v3h-2.4zM1215.6 324.9h3v2.4h-3zM1228.3 324.3h2.4v3h-2.4zM1249.7 323.8h2.4v3h-2.4zM1257.4 324.8h3v2.4h-3zM1151.7 331.4h3v2.4h-3zM1158.2 331.6h3v2.4h-3zM1166.6 331.5h3v2.4h-3zM1201.1 330.8h2.4v3h-2.4zM1214.4 332.3h2.4v3h-2.4zM1236.2 331.9h2.4v3h-2.4zM1243.1 331.7h2.4v3h-2.4zM1256.6 331.8h3v2.4h-3zM1150.1 337.9h3v2.4h-3zM1185.1 337.8h5v3.4h-5zM1194.9 337.9h3v2.4h-3zM1229.3 336.8h2.4v3h-2.4zM1235.4 338.6h2.4v3h-2.4zM1258.0 338.3h3v2.4h-3zM1264.9 337.9h3v2.4h-3zM1157.4 344.3h5v3.4h-5zM1166.1 344.6h3v2.4h-3zM1199.6 344.7h3v2.4h-3zM1206.9 344.3h5v3.4h-5zM1222.2 345.2h2.4v3h-2.4zM1228.1 344.3h3v2.4h-3zM1243.3 343.8h2.4v3h-2.4zM1256.8 345.3h2.4v3h-2.4zM1137.9 350.6h2.4v3h-2.4zM1146.0 351.1h3v2.4h-3zM1159.0 351.2h3v2.4h-3zM1171.0 350.8h3v2.4h-3zM1186.9 351.1h3v2.4h-3zM1229.2 350.8h2.4v3h-2.4zM1256.4 350.3h2.4v3h-2.4zM1213.8 357.6h3v2.4h-3zM1236.0 356.3h2.4v3h-2.4zM1242.7 356.5h2.4v3h-2.4zM1249.7 356.9h2.4v3h-2.4zM1256.5 357.3h3v2.4h-3zM1186.7 364.1h3v2.4h-3zM1193.5 362.8h2.4v3h-2.4zM1201.6 364.2h3v2.4h-3zM1207.4 362.7h2.4v3h-2.4zM1221.9 363.8h2.4v3h-2.4zM1227.2 364.2h3v2.4h-3zM1236.8 364.0h3v2.4h-3zM1138.8 370.5h3v2.4h-3zM1158.3 370.5h4.4v4h-4.4zM1165.8 371.0h2.4v3h-2.4zM1186.8 370.5h2.4v3h-2.4zM1193.6 371.3h2.4v3h-2.4zM1228.9 371.2h2.4v3h-2.4zM1243.9 370.6h3v2.4h-3zM1166.7 377.0h3v2.4h-3zM1185.1 376.8h3v2.4h-3zM1256.7 377.1h3v2.4h-3zM1263.6 376.9h3v2.4h-3zM1152.3 383.6h2.4v3h-2.4zM1165.4 383.6h3v2.4h-3zM1180.2 384.3h2.4v3h-2.4zM1185.9 383.3h5v3.4h-5zM1214.8 382.0h2.4v3h-2.4zM1235.9 382.1h2.4v3h-2.4zM1159.7 390.2h3v2.4h-3zM1171.2 390.2h3v2.4h-3zM1194.0 389.1h2.4v3h-2.4zM1199.3 389.8h5v3.4h-5zM1228.2 390.1h3v2.4h-3zM1236.2 390.1h2.4v3h-2.4zM1249.8 390.2h3v2.4h-3zM1262.8 390.0h3v2.4h-3zM1144.8 396.2h2.4v3h-2.4zM1199.1 396.3h5v3.4h-5zM1236.2 397.0h2.4v3h-2.4zM1249.4 397.4h2.4v3h-2.4zM1165.7 403.3h2.4v3h-2.4zM1172.6 402.6h2.4v3h-2.4zM1179.7 403.3h2.4v3h-2.4zM1187.0 403.0h3v2.4h-3zM1193.5 403.2h2.4v3h-2.4zM1144.3 408.4h4.4v4h-4.4zM1186.7 409.4h2.4v3h-2.4zM1193.9 408.9h2.4v3h-2.4zM1207.5 409.4h2.4v3h-2.4zM1221.8 410.1h2.4v3h-2.4zM1235.4 409.5h2.4v3h-2.4zM1257.3 410.4h2.4v3h-2.4zM1150.9 415.8h5v3.4h-5zM1165.2 416.1h3v2.4h-3zM1172.6 416.0h3v2.4h-3zM1200.7 415.5h2.4v3h-2.4zM1208.0 416.0h3v2.4h-3zM1220.6 415.8h3v2.4h-3zM1241.3 416.1h3v2.4h-3zM1249.8 415.9h3v2.4h-3zM1136.8 422.6h3v2.4h-3zM1143.5 422.7h3v2.4h-3zM1151.1 422.8h3v2.4h-3zM1165.5 422.9h2.4v3h-2.4zM1186.0 422.4h3v2.4h-3zM1193.9 423.1h2.4v3h-2.4zM1228.8 422.4h3v2.4h-3zM1236.6 422.7h3v2.4h-3zM1250.7 422.6h3v2.4h-3zM1186.3 428.7h4.4v4h-4.4zM1192.8 429.3h3v2.4h-3zM1201.0 428.9h3v2.4h-3zM1221.0 428.9h3v2.4h-3zM1227.2 428.8h5v3.4h-5zM1243.3 429.0h2.4v3h-2.4zM1145.3 435.6h3v2.4h-3zM1157.8 435.4h3v2.4h-3zM1186.8 434.0h2.4v3h-2.4zM1192.4 435.5h3v2.4h-3zM1227.7 435.5h3v2.4h-3zM1250.3 435.6h3v2.4h-3zM1138.4 442.1h3v2.4h-3zM1179.3 441.0h2.4v3h-2.4zM1186.3 441.1h4.4v4h-4.4zM1207.7 443.0h2.4v3h-2.4zM1221.3 440.6h4.4v4h-4.4zM1227.9 442.3h3v2.4h-3zM1179.9 448.6h2.4v3h-2.4zM1201.0 448.7h2.4v3h-2.4zM1250.0 448.3h3v2.4h-3zM1263.3 447.6h4.4v4h-4.4z" fill="#a8a08a"/><path d="M1063.0 205.5h5v3h-5zM1070.3 205.3h3v5h-3zM1064.3 211.8h3v5h-3zM1071.0 212.5h5v3h-5zM1078.1 211.9h3v5h-3zM1063.2 218.9h5v3h-5zM1071.0 218.0h5v6h-5zM1079.6 218.0h3v5h-3z" fill="#cdcdc6"/><path d="M1064.3 205.5h2.4v3h-2.4zM1070.3 206.6h3v2.4h-3zM1064.3 213.1h3v2.4h-3zM1078.1 213.2h3v2.4h-3z" fill="#a8a08a"/><path d="M1099.1 191.0h5v6h-5zM1099.5 204.3h5v3h-5zM1101.1 210.7h3v5h-3zM1100.0 219.5h5v3h-5z" fill="#cdcdc6"/><path d="M1100.8 204.3h2.4v3h-2.4zM1101.1 212.0h3v2.4h-3zM1101.3 219.5h2.4v3h-2.4z" fill="#a8a08a"/><path d="M1243.1 241.3h3v5h-3zM1249.0 242.0h5v3h-5zM1255.2 241.5h5v3h-5zM1270.5 241.2h3v5h-3zM1279.0 241.2h3v5h-3zM1242.5 247.9h3v5h-3zM1248.5 249.9h5v3h-5zM1255.0 248.3h7v4h-7zM1262.5 250.0h5v3h-5zM1271.8 247.5h3v5h-3zM1276.7 247.5h5v6h-5zM1241.2 254.3h5v3h-5zM1248.3 254.0h5v6h-5zM1256.0 254.5h5v3h-5zM1263.6 254.4h3v5h-3zM1269.1 254.2h3v5h-3zM1276.7 256.4h5v3h-5zM1242.0 260.6h3v5h-3zM1250.0 261.0h3v5h-3zM1255.2 260.9h3v5h-3zM1262.8 260.9h3v5h-3zM1270.4 260.7h3v5h-3zM1278.1 260.6h3v5h-3zM1244.0 267.4h3v5h-3zM1248.9 267.0h5v6h-5zM1255.9 267.0h3v5h-3zM1264.6 267.0h3v5h-3zM1269.7 267.3h3v5h-3zM1276.2 267.3h3v5h-3zM1243.8 273.8h3v5h-3zM1250.8 273.9h3v5h-3zM1255.8 273.6h5v3h-5zM1263.8 273.9h3v5h-3zM1270.6 273.7h3v5h-3zM1276.7 273.9h5v3h-5zM1241.1 280.2h3v5h-3zM1249.4 280.0h3v5h-3zM1256.5 280.1h3v5h-3zM1263.9 280.0h3v5h-3zM1270.1 280.4h3v5h-3zM1276.4 281.1h5v3h-5zM1241.6 286.6h5v3h-5z" fill="#cdcdc6"/><path d="M1243.1 242.6h3v2.4h-3zM1250.3 242.0h2.4v3h-2.4zM1270.5 242.5h3v2.4h-3zM1242.5 249.2h3v2.4h-3zM1256.3 248.3h4.4v4h-4.4zM1263.8 250.0h2.4v3h-2.4zM1271.8 248.8h3v2.4h-3zM1242.5 254.3h2.4v3h-2.4zM1257.3 254.5h2.4v3h-2.4zM1269.1 255.5h3v2.4h-3zM1270.4 262.0h3v2.4h-3zM1278.1 261.9h3v2.4h-3zM1244.0 268.7h3v2.4h-3zM1248.9 268.3h5v3.4h-5zM1264.6 268.3h3v2.4h-3zM1269.7 268.6h3v2.4h-3zM1263.8 275.2h3v2.4h-3zM1249.4 281.3h3v2.4h-3zM1270.1 281.7h3v2.4h-3zM1242.9 286.6h2.4v3h-2.4z" fill="#a8a08a"/><path d="M1151.4 282.8h5v3h-5zM1181.7 281.1h3v5h-3zM1207.7 281.0h5v6h-5zM1215.9 281.2h3v5h-3zM1152.4 287.9h3v5h-3zM1228.0 288.0h3v5h-3zM1151.7 295.7h5v3h-5zM1159.4 294.3h3v5h-3zM1202.0 294.2h3v5h-3zM1228.0 295.4h5v3h-5z" fill="#cdcdc6"/><path d="M1181.7 282.4h3v2.4h-3zM1207.7 282.3h5v3.4h-5zM1215.9 282.5h3v2.4h-3zM1152.4 289.2h3v2.4h-3zM1228.0 289.3h3v2.4h-3z" fill="#a8a08a"/><path d="M701.4 479.4h3v5h-3zM708.5 479.9h5v3h-5zM717.9 479.5h3v5h-3zM722.6 480.8h5v3h-5zM729.5 480.6h5v3h-5zM736.5 480.6h5v3h-5zM701.4 487.3h5v3h-5zM708.3 486.5h5v3h-5zM716.7 485.8h3v5h-3zM723.5 485.6h3v5h-3zM730.9 485.6h3v5h-3zM737.6 485.7h3v5h-3zM701.7 492.9h5v3h-5zM710.1 492.3h3v5h-3zM716.2 492.5h3v5h-3zM722.4 493.4h5v3h-5zM729.8 492.0h3v5h-3zM736.5 492.1h3v5h-3zM701.2 498.6h5v3h-5zM708.0 498.6h7v4h-7zM715.1 498.7h5v3h-5zM723.9 498.8h3v5h-3zM729.8 499.3h5v3h-5zM737.3 498.7h3v5h-3zM702.4 505.1h3v5h-3zM708.2 506.6h5v3h-5zM715.3 507.2h5v3h-5zM722.2 506.2h5v3h-5zM729.8 505.8h5v3h-5zM738.4 505.4h3v5h-3zM701.0 513.8h5v3h-5zM708.0 512.7h7v4h-7zM717.4 511.7h3v5h-3zM722.6 512.6h5v3h-5zM730.5 511.8h3v5h-3zM736.5 511.9h3v5h-3zM703.7 518.0h3v5h-3zM708.1 518.1h3v5h-3zM715.0 519.3h5v3h-5zM722.4 518.4h5v3h-5zM730.0 518.0h3v5h-3zM737.4 518.4h3v5h-3zM715.3 525.4h5v3h-5zM722.0 524.9h7v4h-7z" fill="#cdcdc6"/><path d="M717.9 480.8h3v2.4h-3zM723.9 480.8h2.4v3h-2.4zM716.7 487.1h3v2.4h-3zM723.5 486.9h3v2.4h-3zM730.9 486.9h3v2.4h-3zM737.6 487.0h3v2.4h-3zM703.0 492.9h2.4v3h-2.4zM729.8 493.3h3v2.4h-3zM736.5 493.4h3v2.4h-3zM716.4 498.7h2.4v3h-2.4zM731.1 499.3h2.4v3h-2.4zM737.3 500.0h3v2.4h-3zM709.3 512.7h4.4v4h-4.4zM703.7 519.3h3v2.4h-3zM708.1 519.4h3v2.4h-3zM716.3 519.3h2.4v3h-2.4zM737.4 519.7h3v2.4h-3z" fill="#a8a08a"/><path d="M685.8 390.5h3v5h-3zM690.1 390.3h3v5h-3zM683.0 396.7h7v4h-7z" fill="#cdcdc6"/><path d="M685.8 391.8h3v2.4h-3z" fill="#a8a08a"/><rect x="1211.5" y="526.2" width="6.0" height="9.0" fill="#1d2120" /><rect x="1212.0" y="526.7" width="5.0" height="8.0" fill="#d0d0ca" rx="1" /><rect x="1212.0" y="528.7" width="5.0" height="4.0" fill="#b4aa8c" /><rect x="1198.9" y="507.7" width="9.0" height="6.0" fill="#1d2120" /><rect x="1199.4" y="508.2" width="8.0" height="5.0" fill="#d0d0ca" rx="1" /><rect x="1201.4" y="508.2" width="4.0" height="5.0" fill="#b4aa8c" /><rect x="1221.7" y="505.3" width="10.0" height="7.0" fill="#1d2120" /><rect x="1222.2" y="505.8" width="9.0" height="6.0" fill="#d0d0ca" rx="1" /><rect x="1224.5" y="505.8" width="4.5" height="6.0" fill="#b4aa8c" /><rect x="1124.4" y="548.6" width="10.0" height="7.0" fill="#1d2120" /><rect x="1124.9" y="549.1" width="9.0" height="6.0" fill="#d0d0ca" rx="1" /><rect x="1127.1" y="549.1" width="4.5" height="6.0" fill="#b4aa8c" /><rect x="1119.6" y="547.7" width="7.0" height="10.0" fill="#1d2120" /><rect x="1120.1" y="548.2" width="6.0" height="9.0" fill="#d0d0ca" rx="1" /><rect x="1120.1" y="550.4" width="6.0" height="4.5" fill="#b4aa8c" /><rect x="1090.2" y="537.8" width="7.0" height="10.0" fill="#1d2120" /><rect x="1090.7" y="538.3" width="6.0" height="9.0" fill="#d0d0ca" rx="1" /><rect x="1090.7" y="540.5" width="6.0" height="4.5" fill="#b4aa8c" /><rect x="1024.2" y="553.7" width="10.0" height="7.0" fill="#1d2120" /><rect x="1024.7" y="554.2" width="9.0" height="6.0" fill="#d0d0ca" rx="1" /><rect x="1026.9" y="554.2" width="4.5" height="6.0" fill="#b4aa8c" /><rect x="1021.6" y="560.1" width="10.0" height="7.0" fill="#1d2120" /><rect x="1022.1" y="560.6" width="9.0" height="6.0" fill="#d0d0ca" rx="1" /><rect x="1024.4" y="560.6" width="4.5" height="6.0" fill="#b4aa8c" /><rect x="1052.7" y="531.2" width="9.0" height="6.0" fill="#1d2120" /><rect x="1053.2" y="531.7" width="8.0" height="5.0" fill="#d0d0ca" rx="1" /><rect x="1055.2" y="531.7" width="4.0" height="5.0" fill="#b4aa8c" /><rect x="1216.2" y="505.0" width="6.0" height="9.0" fill="#1d2120" /><rect x="1216.7" y="505.5" width="5.0" height="8.0" fill="#d0d0ca" rx="1" /><rect x="1216.7" y="507.5" width="5.0" height="4.0" fill="#b4aa8c" /><rect x="1103.1" y="559.0" width="6.0" height="9.0" fill="#1d2120" /><rect x="1103.6" y="559.5" width="5.0" height="8.0" fill="#d0d0ca" rx="1" /><rect x="1103.6" y="561.5" width="5.0" height="4.0" fill="#b4aa8c" /><rect x="1157.3" y="524.8" width="7.0" height="10.0" fill="#1d2120" /><rect x="1157.8" y="525.3" width="6.0" height="9.0" fill="#d0d0ca" rx="1" /><rect x="1157.8" y="527.5" width="6.0" height="4.5" fill="#b4aa8c" /><rect x="1207.1" y="482.3" width="10.0" height="7.0" fill="#1d2120" /><rect x="1207.6" y="482.8" width="9.0" height="6.0" fill="#d0d0ca" rx="1" /><rect x="1209.8" y="482.8" width="4.5" height="6.0" fill="#b4aa8c" /><rect x="965.2" y="533.5" width="6.0" height="9.0" fill="#1d2120" /><rect x="965.7" y="534.0" width="5.0" height="8.0" fill="#d0d0ca" rx="1" /><rect x="965.7" y="536.0" width="5.0" height="4.0" fill="#b4aa8c" /><rect x="977.5" y="480.6" width="9.0" height="6.0" fill="#1d2120" /><rect x="978.0" y="481.1" width="8.0" height="5.0" fill="#d0d0ca" rx="1" /><rect x="980.0" y="481.1" width="4.0" height="5.0" fill="#b4aa8c" /><rect x="1185.9" y="542.3" width="6.0" height="9.0" fill="#1d2120" /><rect x="1186.4" y="542.8" width="5.0" height="8.0" fill="#d0d0ca" rx="1" /><rect x="1186.4" y="544.8" width="5.0" height="4.0" fill="#b4aa8c" /><rect x="1083.7" y="489.2" width="6.0" height="9.0" fill="#1d2120" /><rect x="1084.2" y="489.7" width="5.0" height="8.0" fill="#d0d0ca" rx="1" /><rect x="1084.2" y="491.7" width="5.0" height="4.0" fill="#b4aa8c" /><rect x="1194.6" y="527.5" width="12.0" height="8.0" fill="#1d2120" /><rect x="1195.1" y="528.0" width="11.0" height="7.0" fill="#d0d0ca" rx="1" /><rect x="1197.8" y="528.0" width="5.5" height="7.0" fill="#b4aa8c" /><rect x="1150.6" y="541.2" width="10.0" height="7.0" fill="#1d2120" /><rect x="1151.1" y="541.7" width="9.0" height="6.0" fill="#d0d0ca" rx="1" /><rect x="1153.3" y="541.7" width="4.5" height="6.0" fill="#b4aa8c" /><rect x="988.8" y="545.1" width="9.0" height="6.0" fill="#1d2120" /><rect x="989.3" y="545.6" width="8.0" height="5.0" fill="#d0d0ca" rx="1" /><rect x="991.3" y="545.6" width="4.0" height="5.0" fill="#b4aa8c" /><rect x="979.2" y="557.6" width="10.0" height="7.0" fill="#1d2120" /><rect x="979.7" y="558.1" width="9.0" height="6.0" fill="#d0d0ca" rx="1" /><rect x="982.0" y="558.1" width="4.5" height="6.0" fill="#b4aa8c" /><rect x="1072.4" y="551.2" width="9.0" height="6.0" fill="#1d2120" /><rect x="1072.9" y="551.7" width="8.0" height="5.0" fill="#d0d0ca" rx="1" /><rect x="1074.9" y="551.7" width="4.0" height="5.0" fill="#b4aa8c" /><rect x="1090.1" y="296.4" width="6.0" height="9.0" fill="#1d2120" /><rect x="1090.6" y="296.9" width="5.0" height="8.0" fill="#d0d0ca" rx="1" /><rect x="1090.6" y="298.9" width="5.0" height="4.0" fill="#b4aa8c" /><rect x="1063.9" y="303.2" width="9.0" height="6.0" fill="#1d2120" /><rect x="1064.4" y="303.7" width="8.0" height="5.0" fill="#d0d0ca" rx="1" /><rect x="1066.4" y="303.7" width="4.0" height="5.0" fill="#b4aa8c" /><rect x="1043.3" y="350.2" width="10.0" height="7.0" fill="#1d2120" /><rect x="1043.8" y="350.7" width="9.0" height="6.0" fill="#d0d0ca" rx="1" /><rect x="1046.1" y="350.7" width="4.5" height="6.0" fill="#b4aa8c" /><rect x="1076.7" y="361.2" width="7.0" height="10.0" fill="#1d2120" /><rect x="1077.2" y="361.7" width="6.0" height="9.0" fill="#d0d0ca" rx="1" /><rect x="1077.2" y="364.0" width="6.0" height="4.5" fill="#b4aa8c" /><rect x="1090.5" y="315.4" width="9.0" height="6.0" fill="#1d2120" /><rect x="1091.0" y="315.9" width="8.0" height="5.0" fill="#d0d0ca" rx="1" /><rect x="1093.0" y="315.9" width="4.0" height="5.0" fill="#b4aa8c" /><rect x="1041.8" y="360.4" width="10.0" height="7.0" fill="#1d2120" /><rect x="1042.3" y="360.9" width="9.0" height="6.0" fill="#d0d0ca" rx="1" /><rect x="1044.5" y="360.9" width="4.5" height="6.0" fill="#b4aa8c" /><rect x="1046.6" y="372.9" width="7.0" height="10.0" fill="#1d2120" /><rect x="1047.1" y="373.4" width="6.0" height="9.0" fill="#d0d0ca" rx="1" /><rect x="1047.1" y="375.7" width="6.0" height="4.5" fill="#b4aa8c" /><rect x="1061.1" y="393.3" width="12.0" height="8.0" fill="#1d2120" /><rect x="1061.6" y="393.8" width="11.0" height="7.0" fill="#d0d0ca" rx="1" /><rect x="1064.4" y="393.8" width="5.5" height="7.0" fill="#b4aa8c" /><rect x="1193.7" y="421.5" width="12.0" height="8.0" fill="#1d2120" /><rect x="1194.2" y="422.0" width="11.0" height="7.0" fill="#d0d0ca" rx="1" /><rect x="1197.0" y="422.0" width="5.5" height="7.0" fill="#b4aa8c" /><rect x="1218.1" y="417.9" width="12.0" height="8.0" fill="#1d2120" /><rect x="1218.6" y="418.4" width="11.0" height="7.0" fill="#d0d0ca" rx="1" /><rect x="1221.3" y="418.4" width="5.5" height="7.0" fill="#b4aa8c" /><rect x="1247.3" y="311.9" width="6.0" height="9.0" fill="#1d2120" /><rect x="1247.8" y="312.4" width="5.0" height="8.0" fill="#d0d0ca" rx="1" /><rect x="1247.8" y="314.4" width="5.0" height="4.0" fill="#b4aa8c" /><rect x="1202.7" y="429.9" width="6.0" height="9.0" fill="#1d2120" /><rect x="1203.2" y="430.4" width="5.0" height="8.0" fill="#d0d0ca" rx="1" /><rect x="1203.2" y="432.4" width="5.0" height="4.0" fill="#b4aa8c" /><rect x="1250.0" y="391.9" width="10.0" height="7.0" fill="#1d2120" /><rect x="1250.5" y="392.4" width="9.0" height="6.0" fill="#d0d0ca" rx="1" /><rect x="1252.7" y="392.4" width="4.5" height="6.0" fill="#b4aa8c" /><rect x="1226.4" y="360.5" width="6.0" height="9.0" fill="#1d2120" /><rect x="1226.9" y="361.0" width="5.0" height="8.0" fill="#d0d0ca" rx="1" /><rect x="1226.9" y="363.0" width="5.0" height="4.0" fill="#b4aa8c" /><rect x="1143.1" y="315.8" width="6.0" height="9.0" fill="#1d2120" /><rect x="1143.6" y="316.3" width="5.0" height="8.0" fill="#d0d0ca" rx="1" /><rect x="1143.6" y="318.3" width="5.0" height="4.0" fill="#b4aa8c" /><rect x="1232.2" y="331.9" width="6.0" height="9.0" fill="#1d2120" /><rect x="1232.7" y="332.4" width="5.0" height="8.0" fill="#d0d0ca" rx="1" /><rect x="1232.7" y="334.4" width="5.0" height="4.0" fill="#b4aa8c" /><rect x="1154.0" y="341.3" width="9.0" height="6.0" fill="#1d2120" /><rect x="1154.5" y="341.8" width="8.0" height="5.0" fill="#d0d0ca" rx="1" /><rect x="1156.5" y="341.8" width="4.0" height="5.0" fill="#b4aa8c" /><rect x="725.0" y="229.0" width="24.0" height="23.0" fill="#f2f2ee" rx="1" /><circle cx="710.6" cy="266.3" r="12.6" fill="#b89a48" /><circle cx="710.6" cy="266.3" r="9.0" fill="#a8a898" /><circle cx="738.5" cy="265.8" r="8.0" fill="#6d6c62" /><circle cx="738.5" cy="265.8" r="4.0" fill="#c4a650" /><rect x="685.0" y="282.0" width="20.0" height="18.0" fill="#b39a52" rx="2" /><circle cx="695.0" cy="291.0" r="5.5" fill="#8a949c" /><circle cx="695.0" cy="291.0" r="2.0" fill="#c4a650" /><rect x="684.0" y="304.0" width="27.0" height="49.0" fill="#c8c8c0" rx="2" /><rect x="687.5" y="307.5" width="20.0" height="42.0" fill="#262a28" /><rect x="690.0" y="310.0" width="15.0" height="7.0" fill="#1a1c1c" /><rect x="691.0" y="312.0" width="3.0" height="3.0" fill="#d8d8d2" /><rect x="696.0" y="312.0" width="3.0" height="3.0" fill="#d8d8d2" /><rect x="699.0" y="320.0" width="5.0" height="4.0" fill="#d0d0ca" /><rect x="690.0" y="334.0" width="12.0" height="12.0" fill="#2e3232" /><rect x="699.0" y="326.0" width="4.0" height="4.0" fill="#d0d0ca" /><rect x="716.0" y="294.0" width="23.0" height="62.0" fill="#b4b4ac" rx="2" /><rect x="718.0" y="299.0" width="19.0" height="52.0" fill="#3e4244" /><rect x="718.0" y="295.5" width="19.0" height="3.5" fill="#8a8e90" /><rect x="718.0" y="351.0" width="19.0" height="3.5" fill="#8a8e90" /><path d="M719.0 300.0h7.5v1.5h-7.5z M728.5 300.0h7.5v1.5h-7.5zM719.0 303.2h7.5v1.5h-7.5z M728.5 303.2h7.5v1.5h-7.5zM719.0 306.4h7.5v1.5h-7.5z M728.5 306.4h7.5v1.5h-7.5zM719.0 309.6h7.5v1.5h-7.5z M728.5 309.6h7.5v1.5h-7.5zM719.0 312.8h7.5v1.5h-7.5z M728.5 312.8h7.5v1.5h-7.5zM719.0 316.0h7.5v1.5h-7.5z M728.5 316.0h7.5v1.5h-7.5zM719.0 319.2h7.5v1.5h-7.5z M728.5 319.2h7.5v1.5h-7.5zM719.0 322.4h7.5v1.5h-7.5z M728.5 322.4h7.5v1.5h-7.5zM719.0 325.6h7.5v1.5h-7.5z M728.5 325.6h7.5v1.5h-7.5zM719.0 328.8h7.5v1.5h-7.5z M728.5 328.8h7.5v1.5h-7.5zM719.0 332.0h7.5v1.5h-7.5z M728.5 332.0h7.5v1.5h-7.5zM719.0 335.2h7.5v1.5h-7.5z M728.5 335.2h7.5v1.5h-7.5zM719.0 338.4h7.5v1.5h-7.5z M728.5 338.4h7.5v1.5h-7.5zM719.0 341.6h7.5v1.5h-7.5z M728.5 341.6h7.5v1.5h-7.5zM719.0 344.8h7.5v1.5h-7.5z M728.5 344.8h7.5v1.5h-7.5z" fill="#c4a550"/><rect x="726.3" y="300.0" width="2.4" height="50.0" fill="#6a6e6c" /><circle cx="687.0" cy="374.5" r="11.0" fill="#b49a50" /><circle cx="687.0" cy="374.5" r="8.0" fill="#c8c4b0" /><rect x="720.0" y="400.0" width="23.0" height="62.0" fill="#b4b4ac" rx="2" /><rect x="722.0" y="405.0" width="19.0" height="52.0" fill="#3e4244" /><rect x="722.0" y="401.5" width="19.0" height="3.5" fill="#8a8e90" /><rect x="722.0" y="457.0" width="19.0" height="3.5" fill="#8a8e90" /><path d="M723.0 406.0h7.5v1.5h-7.5z M732.5 406.0h7.5v1.5h-7.5zM723.0 409.2h7.5v1.5h-7.5z M732.5 409.2h7.5v1.5h-7.5zM723.0 412.4h7.5v1.5h-7.5z M732.5 412.4h7.5v1.5h-7.5zM723.0 415.6h7.5v1.5h-7.5z M732.5 415.6h7.5v1.5h-7.5zM723.0 418.8h7.5v1.5h-7.5z M732.5 418.8h7.5v1.5h-7.5zM723.0 422.0h7.5v1.5h-7.5z M732.5 422.0h7.5v1.5h-7.5zM723.0 425.2h7.5v1.5h-7.5z M732.5 425.2h7.5v1.5h-7.5zM723.0 428.4h7.5v1.5h-7.5z M732.5 428.4h7.5v1.5h-7.5zM723.0 431.6h7.5v1.5h-7.5z M732.5 431.6h7.5v1.5h-7.5zM723.0 434.8h7.5v1.5h-7.5z M732.5 434.8h7.5v1.5h-7.5zM723.0 438.0h7.5v1.5h-7.5z M732.5 438.0h7.5v1.5h-7.5zM723.0 441.2h7.5v1.5h-7.5z M732.5 441.2h7.5v1.5h-7.5zM723.0 444.4h7.5v1.5h-7.5z M732.5 444.4h7.5v1.5h-7.5zM723.0 447.6h7.5v1.5h-7.5z M732.5 447.6h7.5v1.5h-7.5zM723.0 450.8h7.5v1.5h-7.5z M732.5 450.8h7.5v1.5h-7.5z" fill="#c4a550"/><rect x="730.3" y="406.0" width="2.4" height="50.0" fill="#6a6e6c" /><rect x="687.0" y="425.5" width="21.0" height="19.5" fill="#b39a52" rx="2" /><circle cx="697.5" cy="435.0" r="5.5" fill="#8a949c" /><circle cx="697.5" cy="435.0" r="2.0" fill="#c4a650" /><path d="M698 475 H745 V531 H698 Z" fill="none" stroke="#c8c8c0" stroke-width="3.5" fill="none"/><rect x="697.0" y="541.0" width="43.0" height="27.0" fill="#b8b8b0" rx="2" /><rect x="701.0" y="546.0" width="35.0" height="17.0" fill="#3a3e40" /><path d="M704 549 V560 M708 549 V560 M712 549 V560 M716 549 V560 M720 549 V560 M724 549 V560 M728 549 V560 M732 549 V560" fill="none" stroke="#c8ae5a" stroke-width="1.3"/><circle cx="716.7" cy="585.0" r="8.0" fill="#6d6c62" /><circle cx="716.7" cy="585.0" r="4.0" fill="#c4a650" /><circle cx="699.0" cy="606.0" r="14.0" fill="#c3a046" /><circle cx="699.0" cy="606.0" r="8.0" fill="#edf1e2" /><circle cx="730.6" cy="618.0" r="5.0" fill="#c3a046" /><circle cx="751.8" cy="618.0" r="5.0" fill="#c3a046" /><path d="M800 590 H870 L873 574 H903 V598 L896 612 H800 Z" fill="#9c977e" /><path d="M806 594 H866 M878 580 H898" fill="none" stroke="#c8c4b0" stroke-width="2"/><rect x="855.0" y="604.0" width="12.0" height="12.0" fill="#e8e8e4" /><rect x="873.0" y="604.0" width="12.0" height="12.0" fill="#e8e8e4" /><circle cx="917.0" cy="606.0" r="15.0" fill="#9a967e" /><circle cx="917.0" cy="606.0" r="8.5" fill="#a8ae9e" /><rect x="886.0" y="498.0" width="21.0" height="62.0" fill="#b4b4ac" rx="2" /><rect x="888.0" y="503.0" width="17.0" height="52.0" fill="#3e4244" /><rect x="888.0" y="499.5" width="17.0" height="3.5" fill="#8a8e90" /><rect x="888.0" y="555.0" width="17.0" height="3.5" fill="#8a8e90" /><path d="M889.0 504.0h6.5v1.5h-6.5z M897.5 504.0h6.5v1.5h-6.5zM889.0 507.2h6.5v1.5h-6.5z M897.5 507.2h6.5v1.5h-6.5zM889.0 510.4h6.5v1.5h-6.5z M897.5 510.4h6.5v1.5h-6.5zM889.0 513.6h6.5v1.5h-6.5z M897.5 513.6h6.5v1.5h-6.5zM889.0 516.8h6.5v1.5h-6.5z M897.5 516.8h6.5v1.5h-6.5zM889.0 520.0h6.5v1.5h-6.5z M897.5 520.0h6.5v1.5h-6.5zM889.0 523.2h6.5v1.5h-6.5z M897.5 523.2h6.5v1.5h-6.5zM889.0 526.4h6.5v1.5h-6.5z M897.5 526.4h6.5v1.5h-6.5zM889.0 529.6h6.5v1.5h-6.5z M897.5 529.6h6.5v1.5h-6.5zM889.0 532.8h6.5v1.5h-6.5z M897.5 532.8h6.5v1.5h-6.5zM889.0 536.0h6.5v1.5h-6.5z M897.5 536.0h6.5v1.5h-6.5zM889.0 539.2h6.5v1.5h-6.5z M897.5 539.2h6.5v1.5h-6.5zM889.0 542.4h6.5v1.5h-6.5z M897.5 542.4h6.5v1.5h-6.5zM889.0 545.6h6.5v1.5h-6.5z M897.5 545.6h6.5v1.5h-6.5zM889.0 548.8h6.5v1.5h-6.5z M897.5 548.8h6.5v1.5h-6.5z" fill="#c4a550"/><rect x="895.3" y="504.0" width="2.4" height="50.0" fill="#6a6e6c" /><rect x="926.0" y="493.0" width="35.0" height="34.0" fill="#1d2120" /><path d="M928.0 495.0h2v2h-2zM928.0 498.5h2v2h-2zM928.0 502.0h2v2h-2zM928.0 505.5h2v2h-2zM928.0 509.0h2v2h-2zM928.0 512.5h2v2h-2zM928.0 516.0h2v2h-2zM928.0 519.5h2v2h-2zM928.0 523.0h2v2h-2zM931.6 495.0h2v2h-2zM931.6 498.5h2v2h-2zM931.6 502.0h2v2h-2zM931.6 505.5h2v2h-2zM931.6 509.0h2v2h-2zM931.6 512.5h2v2h-2zM931.6 516.0h2v2h-2zM931.6 519.5h2v2h-2zM931.6 523.0h2v2h-2zM935.2 495.0h2v2h-2zM935.2 498.5h2v2h-2zM935.2 502.0h2v2h-2zM935.2 505.5h2v2h-2zM935.2 509.0h2v2h-2zM935.2 512.5h2v2h-2zM935.2 516.0h2v2h-2zM935.2 519.5h2v2h-2zM935.2 523.0h2v2h-2zM938.8 495.0h2v2h-2zM938.8 498.5h2v2h-2zM938.8 502.0h2v2h-2zM938.8 505.5h2v2h-2zM938.8 509.0h2v2h-2zM938.8 512.5h2v2h-2zM938.8 516.0h2v2h-2zM938.8 519.5h2v2h-2zM938.8 523.0h2v2h-2zM942.4 495.0h2v2h-2zM942.4 498.5h2v2h-2zM942.4 502.0h2v2h-2zM942.4 505.5h2v2h-2zM942.4 509.0h2v2h-2zM942.4 512.5h2v2h-2zM942.4 516.0h2v2h-2zM942.4 519.5h2v2h-2zM942.4 523.0h2v2h-2zM946.0 495.0h2v2h-2zM946.0 498.5h2v2h-2zM946.0 502.0h2v2h-2zM946.0 505.5h2v2h-2zM946.0 509.0h2v2h-2zM946.0 512.5h2v2h-2zM946.0 516.0h2v2h-2zM946.0 519.5h2v2h-2zM946.0 523.0h2v2h-2zM949.6 495.0h2v2h-2zM949.6 498.5h2v2h-2zM949.6 502.0h2v2h-2zM949.6 505.5h2v2h-2zM949.6 509.0h2v2h-2zM949.6 512.5h2v2h-2zM949.6 516.0h2v2h-2zM949.6 519.5h2v2h-2zM949.6 523.0h2v2h-2zM953.2 495.0h2v2h-2zM953.2 498.5h2v2h-2zM953.2 502.0h2v2h-2zM953.2 505.5h2v2h-2zM953.2 509.0h2v2h-2zM953.2 512.5h2v2h-2zM953.2 516.0h2v2h-2zM953.2 519.5h2v2h-2zM953.2 523.0h2v2h-2zM956.8 495.0h2v2h-2zM956.8 498.5h2v2h-2zM956.8 502.0h2v2h-2zM956.8 505.5h2v2h-2zM956.8 509.0h2v2h-2zM956.8 512.5h2v2h-2zM956.8 516.0h2v2h-2zM956.8 519.5h2v2h-2zM956.8 523.0h2v2h-2z" fill="#d8d8d2"/><circle cx="912.0" cy="582.0" r="5.0" fill="#c3a046" /><circle cx="927.6" cy="582.0" r="5.0" fill="#c3a046" /><circle cx="944.0" cy="582.0" r="5.0" fill="#c3a046" /><circle cx="961.0" cy="582.0" r="5.0" fill="#c3a046" /><rect x="942.0" y="592.0" width="88.0" height="22.0" fill="#a4a49c" rx="2" /><rect x="944.5" y="594.0" width="83.0" height="18.0" fill="#363a40" /><path d="M947 597 H1025 M947 609 H1025" fill="none" stroke="#c8ae5a" stroke-width="3.5" stroke-dasharray="1 1.2"/><rect x="947.0" y="601.5" width="78.0" height="3.0" fill="#6a7080" /><rect x="1046.0" y="592.0" width="88.0" height="22.0" fill="#a4a49c" rx="2" /><rect x="1048.5" y="594.0" width="83.0" height="18.0" fill="#363a40" /><path d="M1051 597 H1129 M1051 609 H1129" fill="none" stroke="#c8ae5a" stroke-width="3.5" stroke-dasharray="1 1.2"/><rect x="1051.0" y="601.5" width="78.0" height="3.0" fill="#6a7080" /><rect x="1150.0" y="592.0" width="53.0" height="22.0" fill="#a89c6a" rx="2" /><rect x="1152.5" y="594.5" width="48.0" height="17.0" fill="#2e3032" /><path d="M1158 597 H1196 M1158 609 H1196" fill="none" stroke="#e0c060" stroke-width="3" stroke-dasharray="3 3"/><rect x="1156.0" y="601.5" width="41.0" height="3.0" fill="#6a6e70" /><circle cx="1037.0" cy="617.0" r="5.0" fill="#c3a046" /><circle cx="1220.7" cy="592.0" r="5.0" fill="#c3a046" /><circle cx="1239.6" cy="589.5" r="5.0" fill="#c3a046" /><circle cx="1255.7" cy="588.0" r="5.0" fill="#c3a046" /><circle cx="1226.5" cy="618.7" r="5.0" fill="#c3a046" /><rect x="1238.0" y="600.0" width="44.0" height="24.5" fill="#b89a48" rx="2" /><circle cx="1248.6" cy="612.0" r="7.5" fill="#c8c8b8" /><circle cx="1269.0" cy="612.0" r="8.0" fill="#d8d8cc" /><path d="M1269 568 L1282 566 L1286 590 L1274 595 Z" fill="#c0c0bc" /><rect x="1260.0" y="477.0" width="23.0" height="27.0" fill="#b89a48" rx="2" /><circle cx="1271.0" cy="490.0" r="7.0" fill="#c0c0b4" /><rect x="1256.0" y="524.0" width="27.0" height="23.0" fill="#c0c0b8" rx="2" /><circle cx="1268.0" cy="535.6" r="6.0" fill="#c4a650" /><circle cx="1268.0" cy="535.6" r="2.5" fill="#3a3020" /><rect x="1129.5" y="490.5" width="45.0" height="50.0" fill="#151817" /><rect x="1100.0" y="492.0" width="20.5" height="16.5" fill="#c9c9c5" /><rect x="1102.5" y="510.0" width="19.5" height="15.0" fill="#8a8070" /><rect x="1102.5" y="528.0" width="18.0" height="14.0" fill="#9a9488" /><rect x="1160.0" y="552.0" width="26.0" height="19.0" fill="#c4c4c2" /><rect x="1084.0" y="446.0" width="21.0" height="16.0" fill="#b0aca0" /><rect x="1052.0" y="393.0" width="52.0" height="43.0" fill="#6c7282" /><rect x="1058.7" y="342.0" width="26.9" height="25.7" fill="#2c3030" /><rect x="1026.7" y="403.6" width="20.3" height="15.4" fill="#b8b5aa" /><rect x="1026.7" y="421.5" width="20.3" height="16.5" fill="#b8b5aa" /><rect x="1026.7" y="439.5" width="20.3" height="17.5" fill="#c2bfb4" /><rect x="1048.5" y="442.0" width="19.2" height="18.0" fill="#b8b5aa" /><rect x="1070.0" y="444.0" width="15.6" height="16.0" fill="#b8b5aa" /><rect x="1034.4" y="322.8" width="17.9" height="14.2" fill="#b8ae98" rx="2" /><rect x="1033.0" y="357.4" width="18.0" height="16.6" fill="#9a7858" /><rect x="1034.4" y="378.0" width="16.6" height="19.0" fill="#606250" /><rect x="1087.0" y="372.8" width="15.3" height="18.0" fill="#b8b8b2" /><rect x="1162.6" y="316.4" width="62.8" height="37.2" fill="#2e3234" /><rect x="1211.3" y="396.0" width="51.3" height="48.6" fill="#2e3234" /><rect x="1162.6" y="370.0" width="24.4" height="19.5" fill="#10141c" /><rect x="1196.0" y="366.4" width="7.6" height="14.1" fill="#e4e4e0" /><rect x="1215.0" y="370.0" width="13.0" height="14.4" fill="#8eb0d0" /><rect x="1161.0" y="407.4" width="17.0" height="12.9" fill="#a8a090" /><rect x="1130.5" y="169.8" width="63.5" height="107.7" fill="#1b1d1c" rx="2" /><rect x="1134.0" y="228.0" width="59.0" height="45.0" fill="#2c2e2c" /><rect x="1135.0" y="270.0" width="57.0" height="3.0" fill="#4a5a7a" /><rect x="1149.0" y="199.0" width="29.0" height="2.5" fill="#5a78a8" /><rect x="1159.0" y="201.0" width="10.0" height="22.0" fill="#6a6040" /><rect x="1136.0" y="204.0" width="5.0" height="21.0" fill="#d0d0c8" rx="1" /><circle cx="1147.0" cy="214.5" r="4.0" fill="#b89a50" /><rect x="1186.0" y="178.0" width="4.5" height="21.0" fill="#d0d0c8" rx="1" /><circle cx="1181.0" cy="188.5" r="4.2" fill="#b89a50" /><rect x="1186.0" y="204.0" width="4.5" height="21.0" fill="#d0d0c8" rx="1" /><circle cx="1181.0" cy="214.5" r="4.2" fill="#b89a50" /><rect x="1120.0" y="175.0" width="9.0" height="14.0" fill="#dcdcd8" rx="4.5" /><rect x="1120.0" y="200.5" width="9.0" height="15.5" fill="#dcdcd8" rx="4.5" /><rect x="1120.0" y="251.0" width="9.0" height="15.0" fill="#dcdcd8" rx="4.5" /><rect x="1195.0" y="186.6" width="11.0" height="15.4" fill="#dcdcd8" rx="5" /><rect x="1195.0" y="211.7" width="11.0" height="16.8" fill="#dcdcd8" rx="5" /><rect x="1195.0" y="252.0" width="11.0" height="14.0" fill="#dcdcd8" rx="5" /><rect x="1207.5" y="203.3" width="26.5" height="18.2" fill="#c8c6be" rx="2" /><rect x="1210.5" y="206.5" width="20.5" height="12.0" fill="#a8a69c" /><rect x="1211.7" y="231.3" width="27.9" height="25.2" fill="#b89a48" /><circle cx="1225.7" cy="242.5" r="8.5" fill="#9c9c90" /><circle cx="1225.7" cy="242.5" r="6.5" fill="#c8c8c0" /><rect x="1211.7" y="259.3" width="26.5" height="18.1" fill="#c0bcb0" rx="1" /><rect x="1065.0" y="188.0" width="26.4" height="11.0" fill="#c4c0b8" rx="1" /><rect x="1255.0" y="213.0" width="28.0" height="11.3" fill="#c4c0b8" rx="1" /><rect x="1062.8" y="244.0" width="13.1" height="26.0" fill="#c8c8c0" /><rect x="1065.0" y="247.0" width="8.5" height="15.0" fill="#8a9aa8" /><rect x="1066.0" y="262.0" width="6.5" height="5.0" fill="#a08850" /><rect x="1080.8" y="244.0" width="13.0" height="26.0" fill="#c8c8c0" /><rect x="1083.0" y="247.0" width="8.5" height="15.0" fill="#8a9aa8" /><rect x="1084.0" y="262.0" width="6.5" height="5.0" fill="#a08850" /><circle cx="1108.0" cy="287.0" r="12.6" fill="#c8a040" /><circle cx="1108.0" cy="287.0" r="7.5" fill="#5a4a20" /><path d="M970 253 H992 L999 260 V276 L992 282 H970 Z" fill="#c3a046" /><circle cx="983.4" cy="268.0" r="8.0" fill="#ebefe0" /><circle cx="1038.3" cy="264.9" r="8.0" fill="#6d6c62" /><circle cx="1038.3" cy="264.9" r="4.0" fill="#c4a650" /><rect x="992.0" y="283.0" width="22.5" height="56.0" fill="#b4b4ac" rx="2" /><rect x="994.0" y="288.0" width="18.5" height="46.0" fill="#3e4244" /><rect x="994.0" y="284.5" width="18.5" height="3.5" fill="#8a8e90" /><rect x="994.0" y="334.0" width="18.5" height="3.5" fill="#8a8e90" /><path d="M995.0 289.0h7.2v1.5h-7.2z M1004.2 289.0h7.2v1.5h-7.2zM995.0 292.2h7.2v1.5h-7.2z M1004.2 292.2h7.2v1.5h-7.2zM995.0 295.4h7.2v1.5h-7.2z M1004.2 295.4h7.2v1.5h-7.2zM995.0 298.6h7.2v1.5h-7.2z M1004.2 298.6h7.2v1.5h-7.2zM995.0 301.8h7.2v1.5h-7.2z M1004.2 301.8h7.2v1.5h-7.2zM995.0 305.0h7.2v1.5h-7.2z M1004.2 305.0h7.2v1.5h-7.2zM995.0 308.2h7.2v1.5h-7.2z M1004.2 308.2h7.2v1.5h-7.2zM995.0 311.4h7.2v1.5h-7.2z M1004.2 311.4h7.2v1.5h-7.2zM995.0 314.6h7.2v1.5h-7.2z M1004.2 314.6h7.2v1.5h-7.2zM995.0 317.8h7.2v1.5h-7.2z M1004.2 317.8h7.2v1.5h-7.2zM995.0 321.0h7.2v1.5h-7.2z M1004.2 321.0h7.2v1.5h-7.2zM995.0 324.2h7.2v1.5h-7.2z M1004.2 324.2h7.2v1.5h-7.2zM995.0 327.4h7.2v1.5h-7.2z M1004.2 327.4h7.2v1.5h-7.2z" fill="#c4a550"/><rect x="1002.0" y="289.0" width="2.4" height="44.0" fill="#6a6e6c" /><rect x="992.0" y="357.0" width="22.5" height="36.5" fill="#b4b4ac" rx="2" /><rect x="994.0" y="362.0" width="18.5" height="26.5" fill="#3e4244" /><rect x="994.0" y="358.5" width="18.5" height="3.5" fill="#8a8e90" /><rect x="994.0" y="388.5" width="18.5" height="3.5" fill="#8a8e90" /><path d="M995.0 363.0h7.2v1.5h-7.2z M1004.2 363.0h7.2v1.5h-7.2zM995.0 366.2h7.2v1.5h-7.2z M1004.2 366.2h7.2v1.5h-7.2zM995.0 369.4h7.2v1.5h-7.2z M1004.2 369.4h7.2v1.5h-7.2zM995.0 372.6h7.2v1.5h-7.2z M1004.2 372.6h7.2v1.5h-7.2zM995.0 375.8h7.2v1.5h-7.2z M1004.2 375.8h7.2v1.5h-7.2zM995.0 379.0h7.2v1.5h-7.2z M1004.2 379.0h7.2v1.5h-7.2zM995.0 382.2h7.2v1.5h-7.2z M1004.2 382.2h7.2v1.5h-7.2z" fill="#c4a550"/><rect x="1002.0" y="363.0" width="2.4" height="24.5" fill="#6a6e6c" /><circle cx="985.0" cy="348.8" r="5.0" fill="#c3a046" /><circle cx="985.0" cy="400.0" r="5.0" fill="#c3a046" /><circle cx="1004.0" cy="403.5" r="5.0" fill="#c3a046" /><rect x="979.0" y="410.5" width="30.7" height="23.8" fill="#b89a48" /><circle cx="996.4" cy="421.7" r="7.5" fill="#b4b4aa" /><rect x="1251.0" y="329.0" width="20.5" height="21.0" fill="#c4c4bc" rx="2" /><circle cx="1261.0" cy="339.5" r="6.0" fill="#c4a650" /><circle cx="1261.0" cy="339.5" r="2.5" fill="#3a3020" /><rect x="1262.5" y="320.0" width="15.5" height="9.0" fill="#d8d8d2" rx="4" /><rect x="1251.0" y="356.0" width="15.0" height="5.0" fill="#d0d0ca" rx="1" /><text x="0" y="0" font-family="Liberation Sans" font-size="10" fill="#9aa09a" transform="translate(701 229) rotate(180)">020</text><text x="1001" y="264.5" font-family="Liberation Mono" font-size="11" font-weight="bold" fill="#c8aa50">08</text><text x="1000" y="274.5" font-family="Liberation Mono" font-size="11" font-weight="bold" fill="#c8aa50" letter-spacing="-0.5">-02</text><text x="0" y="0" font-family="Liberation Mono" font-size="9.5" font-weight="bold" fill="#c8aa50" letter-spacing="-0.3" transform="translate(982 287) rotate(90)">19 18 2V</text><text x="1000" y="353.5" font-family="Liberation Sans" font-size="11" fill="#93a398">071</text><text x="0" y="0" font-family="Liberation Mono" font-size="10" font-weight="bold" fill="#c8aa50" transform="translate(708 364) rotate(90)">UMT-KS A7</text><text x="0" y="0" font-family="Liberation Mono" font-size="11" font-weight="bold" fill="#c8aa50" transform="translate(744 388) rotate(90)">94V-0</text><text x="718" y="378" font-family="Liberation Mono" font-size="8" fill="#c8aa50">RU</text><path d="M1018 420 V444 H982 V476 H922 V568 H987 V580 H1247 V475 L1240 468 H1205 L1192 443 H1131 V434 V308 H1074 V280 H1025 V444" fill="none" stroke="#d2d2ce" stroke-width="4.5" fill="none" stroke-linejoin="round"/><path d="M1133 432 V301 H1225 L1241 319 V358 H1278 V388 L1272 395 V456 H1205 L1199 453 L1188 433 H1133" fill="none" stroke="#d2d2ce" stroke-width="4.5" fill="none" stroke-linejoin="round"/></g><g id="inset"><rect x="829.0" y="645.5" width="313.0" height="214.5" fill="#f6a45c" /><rect x="833.2" y="650.5" width="304.2" height="184.0" fill="#1c201f" /><circle cx="851.8" cy="667.5" r="13.5" fill="#d6b956" /><circle cx="854.1" cy="807.8" r="13.5" fill="#d6b956" /><circle cx="905.4" cy="819.5" r="14.0" fill="#d6b956" /><text x="894" y="675" font-family="Liberation Sans" font-size="29" fill="#a9b5aa" letter-spacing="-1.5" transform="translate(894 675) scale(0.92 1.12) translate(-894 -675)">071</text><path d="M856 717 H868 V761 H856" fill="none" stroke="#3a3e3c" stroke-width="1.2" fill="none"/><rect x="874.0" y="690.0" width="54.0" height="100.0" fill="#9a9c98" rx="3" /><rect x="876.5" y="692.5" width="49.0" height="95.0" fill="#2c3032" rx="2" /><rect x="877.5" y="693.6" width="44.2" height="14.0" fill="#7a90b4" /><rect x="882.0" y="700.0" width="35.0" height="7.6" fill="#4a5a78" /><rect x="886.0" y="710.0" width="26.0" height="70.0" fill="#1a1d1e" /><path d="M878 720.4h15v3.6h-15z M905 720.4h16v3.6h-16zM878 729.8h15v3.6h-15z M905 729.8h16v3.6h-16zM878 739.2h15v3.6h-15z M905 739.2h16v3.6h-16zM878 748.6h15v3.6h-15z M905 748.6h16v3.6h-16zM878 758.0h15v3.6h-15z M905 758.0h16v3.6h-16z" fill="#dcb84e"/><rect x="879.0" y="775.0" width="43.0" height="13.0" fill="#2a2c2e" /><path d="M876 780 V789 H926 V780" fill="none" stroke="#b0b0aa" stroke-width="2" fill="none"/><path d="M957 650.5 H977 L975 770 L966 790 L963 834.5 H940 L944 800 L956 770 Z" fill="#b4b6b0" /><path d="M962 652 L964 770 L952 800 L950 834" fill="none" stroke="#e4e4e0" stroke-width="4" fill="none"/><path d="M972 652 L970 700" fill="none" stroke="#8a8c88" stroke-width="2" fill="none"/><rect x="983.3" y="651.7" width="17.5" height="30.3" fill="#d4d4ce" rx="2" /><rect x="983.3" y="658.4" width="17.5" height="17.0" fill="#c0b498" /><rect x="1003.0" y="650.5" width="37.4" height="21.0" fill="#2c3030" /><rect x="983.3" y="687.8" width="52.5" height="22.2" fill="#d4d4ce" rx="2" /><rect x="993.8" y="687.8" width="31.5" height="22.2" fill="#9c6c4a" /><rect x="983.3" y="715.8" width="52.5" height="22.2" fill="#d4d4ce" rx="2" /><rect x="993.8" y="715.8" width="31.5" height="22.2" fill="#9c6c4a" /><rect x="988.0" y="745.0" width="47.8" height="55.8" fill="#6a6a5c" /><rect x="976.3" y="804.3" width="22.2" height="9.4" fill="#d4d4ce" rx="2" /><rect x="980.7" y="804.3" width="13.3" height="9.4" fill="#3a3c38" /><rect x="1000.8" y="804.3" width="21.0" height="9.4" fill="#d4d4ce" rx="2" /><rect x="1005.0" y="804.3" width="12.6" height="9.4" fill="#3a3c38" /><rect x="967.0" y="819.5" width="56.0" height="15.0" fill="#9a9a94" /><rect x="1042.7" y="650.5" width="9.3" height="17.5" fill="#d4d4ce" rx="2" /><rect x="1042.7" y="654.4" width="9.3" height="9.8" fill="#a89c80" /><rect x="1042.7" y="672.6" width="9.3" height="19.8" fill="#d4d4ce" rx="2" /><rect x="1042.7" y="677.0" width="9.3" height="11.1" fill="#a89c80" /><rect x="1042.7" y="696.0" width="9.3" height="21.0" fill="#d4d4ce" rx="2" /><rect x="1042.7" y="700.6" width="9.3" height="11.8" fill="#a89c80" /><rect x="1058.0" y="650.5" width="73.3" height="66.5" fill="#4c5252" /><g font-family="Liberation Mono" font-size="8.5" fill="#a4aaa6" text-anchor="middle"><text x="1095" y="665">QUALCOMM</text><text x="1095" y="674">WCD9370</text><text x="1095" y="683">001</text><text x="1095" y="692">K1K6H</text><text x="1095" y="701">NE5C3</text><text x="1098" y="710">16</text></g><circle cx="1069.0" cy="706.0" r="2.5" fill="none" stroke="#a4aaa6" stroke-width="1"/><rect x="1042.0" y="725.0" width="10.0" height="15.0" fill="#cfcfc8" rx="2" /><rect x="1055.0" y="720.0" width="28.0" height="10.0" fill="#cfcfc8" rx="2" /><rect x="1088.0" y="720.0" width="9.0" height="10.0" fill="#cfcfc8" rx="2" /><rect x="1101.0" y="720.0" width="10.0" height="10.0" fill="#cfcfc8" rx="2" /><rect x="1117.0" y="725.0" width="9.0" height="20.0" fill="#cfcfc8" rx="2" /><rect x="1046.0" y="744.0" width="10.0" height="9.0" fill="#cfcfc8" rx="2" /><rect x="1066.0" y="737.0" width="12.0" height="13.0" fill="#cfcfc8" rx="2" /><rect x="1083.0" y="735.0" width="17.0" height="35.0" fill="#cfcfc8" rx="2" /><rect x="1103.0" y="735.0" width="12.0" height="13.0" fill="#cfcfc8" rx="2" /><rect x="1121.0" y="748.0" width="9.0" height="12.0" fill="#cfcfc8" rx="2" /><rect x="1040.0" y="755.0" width="15.0" height="28.0" fill="#cfcfc8" rx="2" /><rect x="1066.0" y="757.0" width="12.0" height="13.0" fill="#cfcfc8" rx="2" /><rect x="1103.0" y="755.0" width="12.0" height="13.0" fill="#cfcfc8" rx="2" /><rect x="1059.0" y="777.0" width="31.0" height="9.0" fill="#cfcfc8" rx="2" /><rect x="1095.0" y="777.0" width="21.0" height="9.0" fill="#cfcfc8" rx="2" /><rect x="1120.0" y="770.0" width="10.0" height="16.0" fill="#cfcfc8" rx="2" /><rect x="1058.0" y="725.0" width="10.0" height="10.0" fill="#cfcfc8" rx="2" /><rect x="1087.0" y="742.0" width="11.0" height="23.0" fill="#b4a888" /><rect x="1040.4" y="790.3" width="97.0" height="44.2" fill="#6b7180" /><g stroke="#7c8290" stroke-width="1"><path d="M1042 834 L1072 791"/><path d="M1050 834 L1080 791"/><path d="M1058 834 L1088 791"/><path d="M1066 834 L1096 791"/><path d="M1074 834 L1104 791"/><path d="M1082 834 L1112 791"/><path d="M1090 834 L1120 791"/><path d="M1098 834 L1128 791"/><path d="M1106 834 L1136 791"/></g><circle cx="1062.0" cy="806.0" r="3.5" fill="none" stroke="#a8aebb" stroke-width="1"/><text x="0" y="0" font-family="Liberation Mono" font-size="12" fill="#a8aebb" transform="translate(1122 800) rotate(90)">PE9</text><rect x="1026.4" y="816.0" width="10.6" height="17.0" fill="#d4d4ce" rx="2" /><rect x="1026.4" y="819.7" width="10.6" height="9.5" fill="#a89c80" /><rect x="835.9" y="652.8" width="35.9" height="172.7" fill="none" stroke="#ff0a0a" stroke-width="4.6"/></g><g id="red" fill="none" stroke="#ef1418"><ellipse cx="985" cy="374" rx="10" ry="35" stroke-width="2"/><path d="M985 409 L874 650" stroke-width="3.2"/><path d="M870 644 L872.4 654 L881 648.5" stroke-width="3.2" stroke-linejoin="miter"/></g></svg></div>
</div>

<div id="status" class="a"><div class="a t">XZZ Schematics https://www.xzztools.com</div></div>
</body></html>
